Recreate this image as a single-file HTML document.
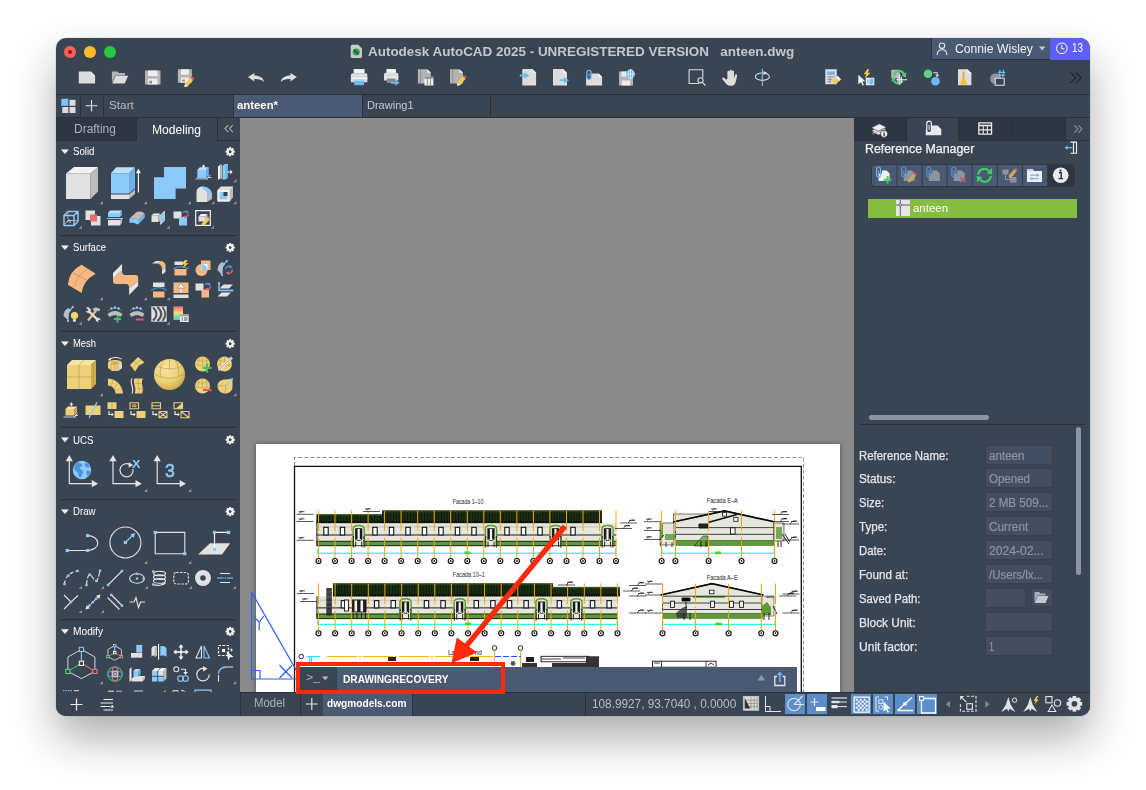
<!DOCTYPE html>
<html><head><meta charset="utf-8"><title>AutoCAD</title><style>
html,body{margin:0;padding:0;}
body{width:1146px;height:790px;background:#fff;position:relative;overflow:hidden;font-family:"Liberation Sans",sans-serif;}
#win{position:absolute;left:56px;top:38px;width:1034px;height:678px;border-radius:10px;background:#3a4554;overflow:hidden;}
#shadow{position:absolute;left:56px;top:38px;width:1034px;height:678px;border-radius:10px;box-shadow:0 22px 45px rgba(0,0,0,0.33),0 0 1px rgba(0,0,0,0.5);}
.a{position:absolute;box-sizing:border-box;}
.t{white-space:nowrap;}
svg{overflow:visible;}
</style></head><body>
<div id="shadow"></div>
<div id="win">
<div class="a " style="left:8px;top:8px;width:12px;height:12px;border-radius:50%;background:#fe5f57;"></div>
<div class="a " style="left:28px;top:8px;width:12px;height:12px;border-radius:50%;background:#febc2e;"></div>
<div class="a " style="left:48px;top:8px;width:12px;height:12px;border-radius:50%;background:#28c840;"></div>
<div class="a " style="left:12px;top:12px;width:4px;height:4px;border-radius:50%;background:#8c1a10;"></div>
<div class="a t" style="left:312.4px;top:5.100000000000001px;height:17px;line-height:17px;font-size:13px;color:#c3c7ce;font-weight:700;transform-origin:0 50%;transform:scaleX(1.0346);">Autodesk AutoCAD 2025 - UNREGISTERED VERSION&nbsp;&nbsp; anteen.dwg</div>
<div class="a " style="left:874.5px;top:0px;width:119.5px;height:21.5px;background:#4a5a72;border-left:1px solid #2b313d;border-bottom:1px solid #2b313d;"></div>
<div class="a t" style="left:899.3px;top:2.6000000000000014px;height:16px;line-height:16px;font-size:12px;color:#f2f3f5;font-weight:400;transform-origin:0 50%;transform:scaleX(1.0145);">Connie Wisley</div>
<div class="a " style="left:993.5999999999999px;top:0px;width:40.4px;height:21.9px;background:#5f5ff5;"></div>
<div class="a t" style="left:1016.3px;top:2.450000000000003px;height:16.5px;line-height:16.5px;font-size:12.5px;color:#fff;font-weight:400;transform-origin:0 50%;transform:scaleX(0.7912);">13</div>
<div class="a " style="left:0px;top:56px;width:1034px;height:24px;border-top:1px solid #2a303c;border-bottom:1px solid #2a303c;"></div>
<div class="a " style="left:24px;top:57px;width:1px;height:22px;background:#2a303c;"></div>
<div class="a " style="left:47px;top:57px;width:1px;height:22px;background:#2a303c;"></div>
<div class="a " style="left:177px;top:57px;width:1px;height:22px;background:#2a303c;"></div>
<div class="a " style="left:306px;top:57px;width:1px;height:22px;background:#2a303c;"></div>
<div class="a " style="left:434px;top:57px;width:1px;height:22px;background:#2a303c;"></div>
<div class="a " style="left:178px;top:57px;width:128px;height:22px;background:#4a5a72;"></div>
<div class="a t" style="left:52.5px;top:59.95px;height:14.5px;line-height:14.5px;font-size:10.5px;color:#b5bbc6;font-weight:400;transform-origin:0 50%;transform:scaleX(1.1185);">Start</div>
<div class="a t" style="left:181px;top:60.05px;height:14.5px;line-height:14.5px;font-size:10.5px;color:#fff;font-weight:700;transform-origin:0 50%;transform:scaleX(1.0810);">anteen*</div>
<div class="a t" style="left:310.5px;top:59.95px;height:14.5px;line-height:14.5px;font-size:10.5px;color:#c3c8d0;font-weight:400;transform-origin:0 50%;transform:scaleX(1.0485);">Drawing1</div>
<div class="a " style="left:184px;top:80px;width:614px;height:574px;background:#8a8a8a;"></div>
<svg class="a" style="left:184px;top:80px;overflow:hidden" width="614" height="574" viewBox="240 118 614 574"><defs><filter id="psh" x="-5%" y="-10%" width="110%" height="120%"><feDropShadow dx="0" dy="0" stdDeviation="2.4" flood-color="#000" flood-opacity="0.45"/></filter></defs><rect x="256" y="444" width="584" height="250" fill="#fff" filter="url(#psh)"/><path d="M294.5 466 V457.5 H801.5" fill="none" stroke="#8a8a8a" stroke-width="1" stroke-dasharray="4 2.1"/><path d="M803.5 457.5 V692" fill="none" stroke="#777" stroke-width="0.8" stroke-dasharray="4 2.1"/><path d="M294.5 692 V466.4 H801.3 V692" fill="none" stroke="#111" stroke-width="1.3"/><rect x="316.5" y="523" width="299.79999999999995" height="18.299999999999955" fill="#e6e6df"/><rect x="316.5" y="541.3" width="299.79999999999995" height="4.400000000000091" fill="#5c9a36"/><path d="M316.5 535.0H616.3M316.5 541.3H616.3M316.5 545.7H616.3M316.9 523V545.7" stroke="#101010" stroke-width="0.95" fill="none"/><path d="M316.5 526.9H616.3" stroke="#9a9a92" stroke-width="0.5"/><rect x="323.8" y="527.3" width="4.4" height="7.7" fill="#fff" stroke="#111" stroke-width="1.1"/><rect x="340.3" y="527.3" width="4.4" height="7.7" fill="#fff" stroke="#111" stroke-width="1.1"/><rect x="372.8" y="527.3" width="4.4" height="7.7" fill="#fff" stroke="#111" stroke-width="1.1"/><rect x="389.3" y="527.3" width="4.4" height="7.7" fill="#fff" stroke="#111" stroke-width="1.1"/><rect x="405.8" y="527.3" width="4.4" height="7.7" fill="#fff" stroke="#111" stroke-width="1.1"/><rect x="422.3" y="527.3" width="4.4" height="7.7" fill="#fff" stroke="#111" stroke-width="1.1"/><rect x="438.8" y="527.3" width="4.4" height="7.7" fill="#fff" stroke="#111" stroke-width="1.1"/><rect x="455.3" y="527.3" width="4.4" height="7.7" fill="#fff" stroke="#111" stroke-width="1.1"/><rect x="471.8" y="527.3" width="4.4" height="7.7" fill="#fff" stroke="#111" stroke-width="1.1"/><rect x="504.8" y="527.3" width="4.4" height="7.7" fill="#fff" stroke="#111" stroke-width="1.1"/><rect x="521.3" y="527.3" width="4.4" height="7.7" fill="#fff" stroke="#111" stroke-width="1.1"/><rect x="537.8" y="527.3" width="4.4" height="7.7" fill="#fff" stroke="#111" stroke-width="1.1"/><rect x="570.8" y="527.3" width="4.4" height="7.7" fill="#fff" stroke="#111" stroke-width="1.1"/><path d="M353.09999999999997 545.2V529Q353.09999999999997 525.4 358.7 525.4Q364.3 525.4 364.3 529V545.2" fill="#e4ead8" stroke="#5c9a36" stroke-width="1.5"/><rect x="355.09999999999997" y="528.2" width="7.2" height="12.5" fill="#1a1a1a"/><rect x="357.59999999999997" y="529" width="2.2" height="11.0" fill="#f4f4f4"/><path d="M353.4 535.9865v11.7M364.0 535.9865v11.7M355.7 541.3v5.5M361.7 541.3v5.5" stroke="#111" stroke-width="0.9"/><path d="M353.7 538.8l2.2 2.5l1.3 -2.5M363.7 538.8l-2.2 2.5l-1.3 -2.5" stroke="#fff" stroke-width="0.8" fill="none"/><path d="M485.4 545.2V529Q485.4 525.4 491 525.4Q496.6 525.4 496.6 529V545.2" fill="#e4ead8" stroke="#5c9a36" stroke-width="1.5"/><rect x="487.4" y="528.2" width="7.2" height="12.5" fill="#1a1a1a"/><rect x="489.9" y="529" width="2.2" height="11.0" fill="#f4f4f4"/><path d="M485.7 535.9865v11.7M496.3 535.9865v11.7M488 541.3v5.5M494 541.3v5.5" stroke="#111" stroke-width="0.9"/><path d="M486 538.8l2.2 2.5l1.3 -2.5M496 538.8l-2.2 2.5l-1.3 -2.5" stroke="#fff" stroke-width="0.8" fill="none"/><path d="M549.9 545.2V529Q549.9 525.4 555.5 525.4Q561.1 525.4 561.1 529V545.2" fill="#e4ead8" stroke="#5c9a36" stroke-width="1.5"/><rect x="551.9" y="528.2" width="7.2" height="12.5" fill="#1a1a1a"/><rect x="554.4" y="529" width="2.2" height="11.0" fill="#f4f4f4"/><path d="M550.2 535.9865v11.7M560.8 535.9865v11.7M552.5 541.3v5.5M558.5 541.3v5.5" stroke="#111" stroke-width="0.9"/><path d="M550.5 538.8l2.2 2.5l1.3 -2.5M560.5 538.8l-2.2 2.5l-1.3 -2.5" stroke="#fff" stroke-width="0.8" fill="none"/><path d="M601.9 545.2V529Q601.9 525.4 607.5 525.4Q613.1 525.4 613.1 529V545.2" fill="#e4ead8" stroke="#5c9a36" stroke-width="1.5"/><rect x="603.9" y="528.2" width="7.2" height="12.5" fill="#1a1a1a"/><rect x="606.4" y="529" width="2.2" height="11.0" fill="#f4f4f4"/><path d="M602.2 535.9865v11.7M612.8 535.9865v11.7M604.5 541.3v5.5M610.5 541.3v5.5" stroke="#111" stroke-width="0.9"/><path d="M602.5 538.8l2.2 2.5l1.3 -2.5M612.5 538.8l-2.2 2.5l-1.3 -2.5" stroke="#fff" stroke-width="0.8" fill="none"/><rect x="316.5" y="514.2" width="66.5" height="9.0" fill="#27401a"/><path d="M317.1 515.8V521.7 M318.7 515.6V521.7 M320.2 516.2V521.7 M321.8 515.5V521.7 M323.3 516.0V521.7 M324.9 515.8V521.7 M326.4 515.5V521.7 M328.0 516.0V521.7 M329.5 515.4V521.7 M331.1 515.9V521.7 M332.6 515.5V521.7 M334.2 515.5V521.7 M335.7 515.9V521.7 M337.3 516.4V521.7 M338.8 515.5V521.7 M340.4 515.7V521.7 M341.9 516.2V521.7 M343.5 516.5V521.7 M345.0 516.1V521.7 M346.6 515.9V521.7 M348.1 516.6V521.7 M349.7 515.5V521.7 M351.2 516.4V521.7 M352.8 515.7V521.7 M354.3 515.6V521.7 M355.9 515.5V521.7 M357.4 515.8V521.7 M359.0 516.4V521.7 M360.5 515.6V521.7 M362.1 516.1V521.7 M363.6 516.2V521.7 M365.2 515.8V521.7 M366.7 516.1V521.7 M368.3 515.5V521.7 M369.8 515.5V521.7 M371.4 515.6V521.7 M372.9 516.2V521.7 M374.5 515.9V521.7 M376.0 515.8V521.7 M377.6 516.1V521.7 M379.1 515.9V521.7 M380.7 515.8V521.7 M382.2 516.4V521.7" stroke="#050805" stroke-width="0.8" opacity="0.85"/><path d="M316.5 514.5H383" stroke="#3c5e26" stroke-width="0.7"/><path d="M316.5 522.1H383" stroke="#000" stroke-width="1.9" stroke-dasharray="1.6 0.7"/><rect x="382" y="510.4" width="220" height="12.800000000000068" fill="#27401a"/><path d="M382.6 512.4V521.7 M384.2 511.9V521.7 M385.7 512.3V521.7 M387.3 512.2V521.7 M388.8 512.7V521.7 M390.4 512.5V521.7 M391.9 511.9V521.7 M393.5 512.8V521.7 M395.0 511.7V521.7 M396.6 512.1V521.7 M398.1 512.5V521.7 M399.7 511.8V521.7 M401.2 512.2V521.7 M402.8 511.6V521.7 M404.3 512.4V521.7 M405.9 512.5V521.7 M407.4 512.3V521.7 M409.0 512.7V521.7 M410.5 512.0V521.7 M412.1 512.4V521.7 M413.6 512.3V521.7 M415.2 512.3V521.7 M416.7 512.1V521.7 M418.3 512.6V521.7 M419.8 512.7V521.7 M421.4 512.2V521.7 M422.9 512.4V521.7 M424.5 511.7V521.7 M426.0 512.4V521.7 M427.6 512.4V521.7 M429.1 512.8V521.7 M430.7 512.6V521.7 M432.2 511.9V521.7 M433.8 512.1V521.7 M435.3 512.4V521.7 M436.9 511.6V521.7 M438.4 512.2V521.7 M440.0 511.8V521.7 M441.5 511.7V521.7 M443.1 511.7V521.7 M444.6 512.5V521.7 M446.2 511.8V521.7 M447.7 511.9V521.7 M449.3 512.1V521.7 M450.8 512.6V521.7 M452.4 511.7V521.7 M453.9 512.1V521.7 M455.5 512.3V521.7 M457.0 512.7V521.7 M458.6 512.6V521.7 M460.1 512.6V521.7 M461.7 511.9V521.7 M463.2 512.1V521.7 M464.8 512.0V521.7 M466.3 512.7V521.7 M467.9 512.7V521.7 M469.4 511.8V521.7 M471.0 511.8V521.7 M472.5 511.9V521.7 M474.1 511.9V521.7 M475.6 512.2V521.7 M477.2 512.3V521.7 M478.7 511.9V521.7 M480.3 511.6V521.7 M481.8 512.1V521.7 M483.4 512.0V521.7 M484.9 512.3V521.7 M486.5 512.7V521.7 M488.0 512.4V521.7 M489.6 512.2V521.7 M491.1 512.3V521.7 M492.7 512.4V521.7 M494.2 511.7V521.7 M495.8 512.7V521.7 M497.3 512.5V521.7 M498.9 512.6V521.7 M500.4 512.6V521.7 M502.0 512.1V521.7 M503.5 512.1V521.7 M505.1 511.7V521.7 M506.6 512.4V521.7 M508.2 511.7V521.7 M509.7 511.7V521.7 M511.3 511.9V521.7 M512.8 511.8V521.7 M514.4 512.0V521.7 M515.9 511.7V521.7 M517.5 511.6V521.7 M519.0 511.8V521.7 M520.6 511.7V521.7 M522.1 512.0V521.7 M523.7 511.6V521.7 M525.2 512.6V521.7 M526.8 512.3V521.7 M528.3 511.8V521.7 M529.9 511.9V521.7 M531.4 512.0V521.7 M533.0 512.0V521.7 M534.5 511.7V521.7 M536.1 512.6V521.7 M537.6 512.8V521.7 M539.2 512.2V521.7 M540.7 512.2V521.7 M542.3 511.7V521.7 M543.8 511.7V521.7 M545.4 512.0V521.7 M546.9 511.9V521.7 M548.4 512.6V521.7 M550.0 511.8V521.7 M551.5 511.6V521.7 M553.1 512.7V521.7 M554.6 512.2V521.7 M556.2 511.8V521.7 M557.7 512.3V521.7 M559.3 511.6V521.7 M560.8 512.2V521.7 M562.4 512.8V521.7 M563.9 512.6V521.7 M565.5 512.4V521.7 M567.0 511.9V521.7 M568.6 512.0V521.7 M570.1 511.8V521.7 M571.7 512.5V521.7 M573.2 512.2V521.7 M574.8 512.5V521.7 M576.3 512.0V521.7 M577.9 511.9V521.7 M579.4 512.6V521.7 M581.0 512.8V521.7 M582.5 512.6V521.7 M584.1 512.6V521.7 M585.6 512.6V521.7 M587.2 512.5V521.7 M588.7 511.9V521.7 M590.3 512.2V521.7 M591.8 512.0V521.7 M593.4 511.6V521.7 M594.9 511.6V521.7 M596.5 511.9V521.7 M598.0 511.9V521.7 M599.6 512.4V521.7 M601.1 512.7V521.7" stroke="#050805" stroke-width="0.8" opacity="0.85"/><path d="M382 510.7H602" stroke="#3c5e26" stroke-width="0.7"/><path d="M382 522.1H602" stroke="#000" stroke-width="1.9" stroke-dasharray="1.6 0.7"/><path d="M317.5 553.2H616.04M317.8 553.2v-4M615.74 553.2v-4" stroke="#00f0f0" stroke-width="1" fill="none"/><path d="M318.5 510.5V558.2 M335.0 510.5V558.2 M351.6 510.5V558.2 M368.1 510.5V558.2 M384.6 510.5V558.2 M401.1 510.5V558.2 M417.7 510.5V558.2 M434.2 510.5V558.2 M450.7 510.5V558.2 M467.3 510.5V558.2 M483.8 510.5V558.2 M500.3 510.5V558.2 M516.9 510.5V558.2 M533.4 510.5V558.2 M549.9 510.5V558.2 M566.5 510.5V558.2 M583.0 510.5V558.2 M599.5 510.5V558.2 M616.0 510.5V558.2" stroke="#f2a900" stroke-width="1" stroke-dasharray="20.5 2.2 1.3 3.2 200"/><circle cx="318.5" cy="561" r="2.5" fill="#fff" stroke="#0a0a0a" stroke-width="1.15"/><path d="M317.8 560.1h1.4v1.8h-1.4z" fill="#222"/><circle cx="335.0" cy="561" r="2.5" fill="#fff" stroke="#0a0a0a" stroke-width="1.15"/><path d="M334.3 560.1h1.4v1.8h-1.4z" fill="#222"/><circle cx="351.6" cy="561" r="2.5" fill="#fff" stroke="#0a0a0a" stroke-width="1.15"/><path d="M350.9 560.1h1.4v1.8h-1.4z" fill="#222"/><circle cx="368.1" cy="561" r="2.5" fill="#fff" stroke="#0a0a0a" stroke-width="1.15"/><path d="M367.4 560.1h1.4v1.8h-1.4z" fill="#222"/><circle cx="384.6" cy="561" r="2.5" fill="#fff" stroke="#0a0a0a" stroke-width="1.15"/><path d="M383.9 560.1h1.4v1.8h-1.4z" fill="#222"/><circle cx="401.1" cy="561" r="2.5" fill="#fff" stroke="#0a0a0a" stroke-width="1.15"/><path d="M400.4 560.1h1.4v1.8h-1.4z" fill="#222"/><circle cx="417.7" cy="561" r="2.5" fill="#fff" stroke="#0a0a0a" stroke-width="1.15"/><path d="M417.0 560.1h1.4v1.8h-1.4z" fill="#222"/><circle cx="434.2" cy="561" r="2.5" fill="#fff" stroke="#0a0a0a" stroke-width="1.15"/><path d="M433.5 560.1h1.4v1.8h-1.4z" fill="#222"/><circle cx="450.7" cy="561" r="2.5" fill="#fff" stroke="#0a0a0a" stroke-width="1.15"/><path d="M450.0 560.1h1.4v1.8h-1.4z" fill="#222"/><circle cx="467.3" cy="561" r="2.5" fill="#fff" stroke="#0a0a0a" stroke-width="1.15"/><path d="M466.6 560.1h1.4v1.8h-1.4z" fill="#222"/><circle cx="483.8" cy="561" r="2.5" fill="#fff" stroke="#0a0a0a" stroke-width="1.15"/><path d="M483.1 560.1h1.4v1.8h-1.4z" fill="#222"/><circle cx="500.3" cy="561" r="2.5" fill="#fff" stroke="#0a0a0a" stroke-width="1.15"/><path d="M499.6 560.1h1.4v1.8h-1.4z" fill="#222"/><circle cx="516.9" cy="561" r="2.5" fill="#fff" stroke="#0a0a0a" stroke-width="1.15"/><path d="M516.2 560.1h1.4v1.8h-1.4z" fill="#222"/><circle cx="533.4" cy="561" r="2.5" fill="#fff" stroke="#0a0a0a" stroke-width="1.15"/><path d="M532.7 560.1h1.4v1.8h-1.4z" fill="#222"/><circle cx="549.9" cy="561" r="2.5" fill="#fff" stroke="#0a0a0a" stroke-width="1.15"/><path d="M549.2 560.1h1.4v1.8h-1.4z" fill="#222"/><circle cx="566.5" cy="561" r="2.5" fill="#fff" stroke="#0a0a0a" stroke-width="1.15"/><path d="M565.8 560.1h1.4v1.8h-1.4z" fill="#222"/><circle cx="583.0" cy="561" r="2.5" fill="#fff" stroke="#0a0a0a" stroke-width="1.15"/><path d="M582.3 560.1h1.4v1.8h-1.4z" fill="#222"/><circle cx="599.5" cy="561" r="2.5" fill="#fff" stroke="#0a0a0a" stroke-width="1.15"/><path d="M598.8 560.1h1.4v1.8h-1.4z" fill="#222"/><circle cx="616.0" cy="561" r="2.5" fill="#fff" stroke="#0a0a0a" stroke-width="1.15"/><path d="M615.3 560.1h1.4v1.8h-1.4z" fill="#222"/><rect x="464.5" y="551.5" width="6" height="2.7" fill="#35e01c"/><path d="M296.5 514.3h17M298.5 511.69999999999993h6M299.5 513.0l3 -2" stroke="#111" stroke-width="0.7" fill="none"/><path d="M296.5 521.5h17M298.5 518.9h6M299.5 520.2l3 -2" stroke="#111" stroke-width="0.7" fill="none"/><path d="M296.5 540.3h17M298.5 537.6999999999999h6M299.5 539.0l3 -2" stroke="#111" stroke-width="0.7" fill="none"/><path d="M363 511.5h17M365 508.9h6M366 510.2l3 -2" stroke="#111" stroke-width="0.7" fill="none"/><path d="M637 523h-17M635 520.4h-6M628 523l3 -3h4" stroke="#111" stroke-width="0.7" fill="none"/><path d="M632 528.5h-17M630 525.9h-6M623 528.5l3 -3h4" stroke="#111" stroke-width="0.7" fill="none"/><text x="452.8" y="504" font-size="7.4" fill="#222" textLength="30.5" lengthAdjust="spacingAndGlyphs" font-family="Liberation Sans,sans-serif">Facada 1–10</text><rect x="316.5" y="596.3" width="301.0" height="17.700000000000045" fill="#e6e6df"/><rect x="316.5" y="614" width="301.0" height="4.600000000000023" fill="#5c9a36"/><path d="M316.5 607.9H617.5M316.5 614H617.5M316.5 618.6H617.5M316.9 596.3V618.6" stroke="#101010" stroke-width="0.95" fill="none"/><path d="M316.5 600.2H617.5" stroke="#9a9a92" stroke-width="0.5"/><rect x="341.21000000000004" y="600.6" width="4.4" height="7.3" fill="#fff" stroke="#111" stroke-width="1.1"/><rect x="374.43" y="600.6" width="4.4" height="7.3" fill="#fff" stroke="#111" stroke-width="1.1"/><rect x="391.04" y="600.6" width="4.4" height="7.3" fill="#fff" stroke="#111" stroke-width="1.1"/><rect x="424.26" y="600.6" width="4.4" height="7.3" fill="#fff" stroke="#111" stroke-width="1.1"/><rect x="440.87" y="600.6" width="4.4" height="7.3" fill="#fff" stroke="#111" stroke-width="1.1"/><rect x="474.09000000000003" y="600.6" width="4.4" height="7.3" fill="#fff" stroke="#111" stroke-width="1.1"/><rect x="490.70000000000005" y="600.6" width="4.4" height="7.3" fill="#fff" stroke="#111" stroke-width="1.1"/><rect x="507.31" y="600.6" width="4.4" height="7.3" fill="#fff" stroke="#111" stroke-width="1.1"/><rect x="523.9199999999998" y="600.6" width="4.4" height="7.3" fill="#fff" stroke="#111" stroke-width="1.1"/><rect x="557.1399999999999" y="600.6" width="4.4" height="7.3" fill="#fff" stroke="#111" stroke-width="1.1"/><rect x="590.3599999999999" y="600.6" width="4.4" height="7.3" fill="#fff" stroke="#111" stroke-width="1.1"/><rect x="606.9699999999999" y="600.6" width="4.4" height="7.3" fill="#fff" stroke="#111" stroke-width="1.1"/><path d="M399.9 618.1V602.3Q399.9 598.6999999999999 405.5 598.6999999999999Q411.1 598.6999999999999 411.1 602.3V618.1" fill="#e4ead8" stroke="#5c9a36" stroke-width="1.5"/><rect x="401.9" y="601.5" width="7.2" height="12.1" fill="#1a1a1a"/><rect x="404.4" y="602.3" width="2.2" height="10.6" fill="#f4f4f4"/><path d="M400.2 608.8935v11.7M410.8 608.8935v11.7M402.5 614v5.5M408.5 614v5.5" stroke="#111" stroke-width="0.9"/><path d="M400.5 611.5l2.2 2.5l1.3 -2.5M410.5 611.5l-2.2 2.5l-1.3 -2.5" stroke="#fff" stroke-width="0.8" fill="none"/><path d="M454.09999999999997 618.1V602.3Q454.09999999999997 598.6999999999999 459.7 598.6999999999999Q465.3 598.6999999999999 465.3 602.3V618.1" fill="#e4ead8" stroke="#5c9a36" stroke-width="1.5"/><rect x="456.09999999999997" y="601.5" width="7.2" height="12.1" fill="#1a1a1a"/><rect x="458.59999999999997" y="602.3" width="2.2" height="10.6" fill="#f4f4f4"/><path d="M454.4 608.8935v11.7M465.0 608.8935v11.7M456.7 614v5.5M462.7 614v5.5" stroke="#111" stroke-width="0.9"/><path d="M454.7 611.5l2.2 2.5l1.3 -2.5M464.7 611.5l-2.2 2.5l-1.3 -2.5" stroke="#fff" stroke-width="0.8" fill="none"/><path d="M535.9 618.1V602.3Q535.9 598.6999999999999 541.5 598.6999999999999Q547.1 598.6999999999999 547.1 602.3V618.1" fill="#e4ead8" stroke="#5c9a36" stroke-width="1.5"/><rect x="537.9" y="601.5" width="7.2" height="12.1" fill="#1a1a1a"/><rect x="540.4" y="602.3" width="2.2" height="10.6" fill="#f4f4f4"/><path d="M536.2 608.8935v11.7M546.8 608.8935v11.7M538.5 614v5.5M544.5 614v5.5" stroke="#111" stroke-width="0.9"/><path d="M536.5 611.5l2.2 2.5l1.3 -2.5M546.5 611.5l-2.2 2.5l-1.3 -2.5" stroke="#fff" stroke-width="0.8" fill="none"/><path d="M570.8 618.1V602.3Q570.8 598.6999999999999 576.4 598.6999999999999Q582.0 598.6999999999999 582.0 602.3V618.1" fill="#e4ead8" stroke="#5c9a36" stroke-width="1.5"/><rect x="572.8" y="601.5" width="7.2" height="12.1" fill="#1a1a1a"/><rect x="575.3" y="602.3" width="2.2" height="10.6" fill="#f4f4f4"/><path d="M571.1 608.8935v11.7M581.6999999999999 608.8935v11.7M573.4 614v5.5M579.4 614v5.5" stroke="#111" stroke-width="0.9"/><path d="M571.4 611.5l2.2 2.5l1.3 -2.5M581.4 611.5l-2.2 2.5l-1.3 -2.5" stroke="#fff" stroke-width="0.8" fill="none"/><rect x="344.5" y="600" width="4" height="11" fill="#fff" stroke="#111" stroke-width="0.9"/><rect x="352" y="599.5" width="14.5" height="13" fill="#1a1a1a"/><rect x="354.5" y="600.5" width="2.6" height="11" fill="#f4f4f4"/><rect x="360.500" y="600.500" width="2.600" height="11" fill="#f4f4f4"/><path d="M353 613v6M365.500 613v6M357 613v5M361.500 613v5" stroke="#111" stroke-width="0.900"/><rect x="333" y="583.3" width="220" height="13.200000000000045" fill="#27401a"/><path d="M333.6 585.0V595.0 M335.2 585.6V595.0 M336.7 585.7V595.0 M338.3 585.6V595.0 M339.8 584.9V595.0 M341.4 584.8V595.0 M342.9 584.8V595.0 M344.5 584.7V595.0 M346.0 584.7V595.0 M347.6 585.2V595.0 M349.1 585.6V595.0 M350.7 585.5V595.0 M352.2 585.1V595.0 M353.8 585.3V595.0 M355.3 585.5V595.0 M356.9 584.6V595.0 M358.4 585.3V595.0 M360.0 585.6V595.0 M361.5 585.4V595.0 M363.1 585.4V595.0 M364.6 585.1V595.0 M366.2 584.7V595.0 M367.7 585.4V595.0 M369.3 584.9V595.0 M370.8 585.5V595.0 M372.4 585.7V595.0 M373.9 585.0V595.0 M375.5 585.0V595.0 M377.0 585.6V595.0 M378.6 585.4V595.0 M380.1 584.7V595.0 M381.7 584.7V595.0 M383.2 584.7V595.0 M384.8 585.6V595.0 M386.3 585.5V595.0 M387.9 584.7V595.0 M389.4 585.5V595.0 M391.0 585.7V595.0 M392.5 585.3V595.0 M394.1 584.9V595.0 M395.6 585.2V595.0 M397.2 584.7V595.0 M398.7 584.5V595.0 M400.3 585.7V595.0 M401.8 585.3V595.0 M403.4 585.1V595.0 M404.9 585.6V595.0 M406.5 585.0V595.0 M408.0 585.5V595.0 M409.6 585.5V595.0 M411.1 584.8V595.0 M412.7 584.8V595.0 M414.2 584.9V595.0 M415.8 584.8V595.0 M417.3 585.2V595.0 M418.9 584.8V595.0 M420.4 585.0V595.0 M422.0 584.7V595.0 M423.5 585.6V595.0 M425.1 584.9V595.0 M426.6 585.0V595.0 M428.2 585.2V595.0 M429.7 585.6V595.0 M431.3 585.0V595.0 M432.8 585.6V595.0 M434.4 585.1V595.0 M435.9 585.1V595.0 M437.5 585.1V595.0 M439.0 584.5V595.0 M440.6 585.0V595.0 M442.1 584.7V595.0 M443.7 584.5V595.0 M445.2 585.5V595.0 M446.8 584.7V595.0 M448.3 585.1V595.0 M449.9 585.4V595.0 M451.4 585.2V595.0 M453.0 584.9V595.0 M454.5 585.1V595.0 M456.1 585.2V595.0 M457.6 585.4V595.0 M459.2 584.6V595.0 M460.7 585.2V595.0 M462.3 584.8V595.0 M463.8 584.8V595.0 M465.4 585.4V595.0 M466.9 585.1V595.0 M468.5 585.2V595.0 M470.0 585.4V595.0 M471.6 585.6V595.0 M473.1 585.0V595.0 M474.7 585.2V595.0 M476.2 585.1V595.0 M477.8 585.1V595.0 M479.3 585.3V595.0 M480.9 585.0V595.0 M482.4 585.1V595.0 M484.0 585.1V595.0 M485.5 585.6V595.0 M487.1 585.3V595.0 M488.6 585.6V595.0 M490.2 585.6V595.0 M491.7 584.8V595.0 M493.3 585.2V595.0 M494.8 585.6V595.0 M496.4 585.5V595.0 M497.9 584.7V595.0 M499.5 584.6V595.0 M501.0 585.0V595.0 M502.6 584.6V595.0 M504.1 584.8V595.0 M505.7 584.6V595.0 M507.2 585.3V595.0 M508.8 585.4V595.0 M510.3 585.6V595.0 M511.9 584.7V595.0 M513.4 585.4V595.0 M515.0 585.3V595.0 M516.5 584.7V595.0 M518.1 585.6V595.0 M519.6 585.7V595.0 M521.2 584.8V595.0 M522.7 585.6V595.0 M524.3 585.0V595.0 M525.8 585.1V595.0 M527.4 585.7V595.0 M528.9 585.5V595.0 M530.5 584.7V595.0 M532.0 585.0V595.0 M533.6 585.1V595.0 M535.1 584.9V595.0 M536.7 584.7V595.0 M538.2 584.9V595.0 M539.8 585.4V595.0 M541.3 584.5V595.0 M542.9 585.2V595.0 M544.4 585.0V595.0 M546.0 584.5V595.0 M547.5 584.9V595.0 M549.1 585.2V595.0 M550.6 585.1V595.0 M552.2 584.6V595.0" stroke="#050805" stroke-width="0.8" opacity="0.85"/><path d="M333 583.5999999999999H553" stroke="#3c5e26" stroke-width="0.7"/><path d="M333 595.4H553" stroke="#000" stroke-width="1.9" stroke-dasharray="1.6 0.7"/><rect x="552" y="587" width="67.79999999999995" height="9.5" fill="#27401a"/><path d="M552.6 589.4V595.0 M554.1 589.1V595.0 M555.7 589.4V595.0 M557.2 588.3V595.0 M558.8 588.5V595.0 M560.3 588.2V595.0 M561.9 589.1V595.0 M563.4 588.5V595.0 M565.0 588.4V595.0 M566.5 588.7V595.0 M568.1 589.3V595.0 M569.6 589.2V595.0 M571.2 588.5V595.0 M572.7 588.4V595.0 M574.3 589.3V595.0 M575.8 588.9V595.0 M577.4 589.0V595.0 M578.9 588.3V595.0 M580.5 588.3V595.0 M582.0 589.0V595.0 M583.6 588.7V595.0 M585.1 588.3V595.0 M586.7 589.3V595.0 M588.2 589.0V595.0 M589.8 589.2V595.0 M591.3 588.3V595.0 M592.9 589.2V595.0 M594.4 588.3V595.0 M596.0 589.2V595.0 M597.5 588.7V595.0 M599.1 588.6V595.0 M600.6 588.9V595.0 M602.2 589.3V595.0 M603.7 588.5V595.0 M605.3 588.4V595.0 M606.8 588.8V595.0 M608.4 588.5V595.0 M609.9 588.3V595.0 M611.5 588.4V595.0 M613.0 588.3V595.0 M614.6 588.4V595.0 M616.1 588.6V595.0 M617.7 588.6V595.0 M619.2 589.1V595.0" stroke="#050805" stroke-width="0.8" opacity="0.85"/><path d="M552 587.3H619.8" stroke="#3c5e26" stroke-width="0.7"/><path d="M552 595.4H619.8" stroke="#000" stroke-width="1.9" stroke-dasharray="1.6 0.7"/><rect x="326.300" y="588" width="5.600" height="27.500" fill="#222" opacity="0.880"/><path d="M326 592h6M326 597h6M326 602h6M326 607h6" stroke="#888" stroke-width="0.500"/><path d="M317.5 624.3H617.48M317.8 624.3v-4M617.1800000000001 624.3v-4" stroke="#00f0f0" stroke-width="1" fill="none"/><path d="M318.5 583.5V630.4000000000001 M335.1 583.5V630.4000000000001 M351.7 583.5V630.4000000000001 M368.3 583.5V630.4000000000001 M384.9 583.5V630.4000000000001 M401.6 583.5V630.4000000000001 M418.2 583.5V630.4000000000001 M434.8 583.5V630.4000000000001 M451.4 583.5V630.4000000000001 M468.0 583.5V630.4000000000001 M484.6 583.5V630.4000000000001 M501.2 583.5V630.4000000000001 M517.8 583.5V630.4000000000001 M534.4 583.5V630.4000000000001 M551.0 583.5V630.4000000000001 M567.6 583.5V630.4000000000001 M584.3 583.5V630.4000000000001 M600.9 583.5V630.4000000000001 M617.5 583.5V630.4000000000001" stroke="#f2a900" stroke-width="1" stroke-dasharray="20.5 2.2 1.3 3.2 200"/><circle cx="318.5" cy="633.2" r="2.5" fill="#fff" stroke="#0a0a0a" stroke-width="1.15"/><path d="M317.8 632.3000000000001h1.4v1.8h-1.4z" fill="#222"/><circle cx="335.1" cy="633.2" r="2.5" fill="#fff" stroke="#0a0a0a" stroke-width="1.15"/><path d="M334.4 632.3000000000001h1.4v1.8h-1.4z" fill="#222"/><circle cx="351.7" cy="633.2" r="2.5" fill="#fff" stroke="#0a0a0a" stroke-width="1.15"/><path d="M351.0 632.3000000000001h1.4v1.8h-1.4z" fill="#222"/><circle cx="368.3" cy="633.2" r="2.5" fill="#fff" stroke="#0a0a0a" stroke-width="1.15"/><path d="M367.6 632.3000000000001h1.4v1.8h-1.4z" fill="#222"/><circle cx="384.9" cy="633.2" r="2.5" fill="#fff" stroke="#0a0a0a" stroke-width="1.15"/><path d="M384.2 632.3000000000001h1.4v1.8h-1.4z" fill="#222"/><circle cx="401.6" cy="633.2" r="2.5" fill="#fff" stroke="#0a0a0a" stroke-width="1.15"/><path d="M400.9 632.3000000000001h1.4v1.8h-1.4z" fill="#222"/><circle cx="418.2" cy="633.2" r="2.5" fill="#fff" stroke="#0a0a0a" stroke-width="1.15"/><path d="M417.5 632.3000000000001h1.4v1.8h-1.4z" fill="#222"/><circle cx="434.8" cy="633.2" r="2.5" fill="#fff" stroke="#0a0a0a" stroke-width="1.15"/><path d="M434.1 632.3000000000001h1.4v1.8h-1.4z" fill="#222"/><circle cx="451.4" cy="633.2" r="2.5" fill="#fff" stroke="#0a0a0a" stroke-width="1.15"/><path d="M450.7 632.3000000000001h1.4v1.8h-1.4z" fill="#222"/><circle cx="468.0" cy="633.2" r="2.5" fill="#fff" stroke="#0a0a0a" stroke-width="1.15"/><path d="M467.3 632.3000000000001h1.4v1.8h-1.4z" fill="#222"/><circle cx="484.6" cy="633.2" r="2.5" fill="#fff" stroke="#0a0a0a" stroke-width="1.15"/><path d="M483.9 632.3000000000001h1.4v1.8h-1.4z" fill="#222"/><circle cx="501.2" cy="633.2" r="2.5" fill="#fff" stroke="#0a0a0a" stroke-width="1.15"/><path d="M500.5 632.3000000000001h1.4v1.8h-1.4z" fill="#222"/><circle cx="517.8" cy="633.2" r="2.5" fill="#fff" stroke="#0a0a0a" stroke-width="1.15"/><path d="M517.1 632.3000000000001h1.4v1.8h-1.4z" fill="#222"/><circle cx="534.4" cy="633.2" r="2.5" fill="#fff" stroke="#0a0a0a" stroke-width="1.15"/><path d="M533.7 632.3000000000001h1.4v1.8h-1.4z" fill="#222"/><circle cx="551.0" cy="633.2" r="2.5" fill="#fff" stroke="#0a0a0a" stroke-width="1.15"/><path d="M550.3 632.3000000000001h1.4v1.8h-1.4z" fill="#222"/><circle cx="567.6" cy="633.2" r="2.5" fill="#fff" stroke="#0a0a0a" stroke-width="1.15"/><path d="M566.9 632.3000000000001h1.4v1.8h-1.4z" fill="#222"/><circle cx="584.3" cy="633.2" r="2.5" fill="#fff" stroke="#0a0a0a" stroke-width="1.15"/><path d="M583.6 632.3000000000001h1.4v1.8h-1.4z" fill="#222"/><circle cx="600.9" cy="633.2" r="2.5" fill="#fff" stroke="#0a0a0a" stroke-width="1.15"/><path d="M600.2 632.3000000000001h1.4v1.8h-1.4z" fill="#222"/><circle cx="617.5" cy="633.2" r="2.5" fill="#fff" stroke="#0a0a0a" stroke-width="1.15"/><path d="M616.8 632.3000000000001h1.4v1.8h-1.4z" fill="#222"/><rect x="465" y="622.5999999999999" width="6" height="2.7" fill="#35e01c"/><path d="M297 593.5h17M299 590.9h6M300 592.2l3 -2" stroke="#111" stroke-width="0.7" fill="none"/><path d="M300 601.5h17M302 598.9h6M303 600.2l3 -2" stroke="#111" stroke-width="0.7" fill="none"/><path d="M575 585h-17M573 582.4h-6M566 585l3 -3h4" stroke="#111" stroke-width="0.7" fill="none"/><path d="M646 585.5h-17M644 582.9h-6M637 585.5l3 -3h4" stroke="#111" stroke-width="0.7" fill="none"/><path d="M640 591h-17M638 588.4h-6M631 591l3 -3h4" stroke="#111" stroke-width="0.7" fill="none"/><path d="M646 596h-17M644 593.4h-6M637 596l3 -3h4" stroke="#111" stroke-width="0.7" fill="none"/><path d="M646 613h-17M644 610.4h-6M637 613l3 -3h4" stroke="#111" stroke-width="0.7" fill="none"/><text x="452.8" y="577.3" font-size="7.4" fill="#222" textLength="32" lengthAdjust="spacingAndGlyphs" font-family="Liberation Sans,sans-serif">Facada 10–1</text><rect x="673.5" y="514" width="50" height="8" fill="#e6e6df" stroke="#222" stroke-width="0.6"/><path d="M675.5 521.6L724.5 510.8L774 521.6V541H675.5Z" fill="#e6e6df" stroke="#111" stroke-width="0.8"/><path d="M673 522L724.5 510.8L775 522" fill="none" stroke="#0a0a0a" stroke-width="1.7"/><path d="M708 522.5L737 514.5" stroke="#0a0a0a" stroke-width="1.5"/><rect x="675.5" y="540.8" width="98.5" height="4.8" fill="#5c9a36" stroke="#2c4a18" stroke-width="0.4"/><path d="M676 527.6H774M676 534.3H774" stroke="#151515" stroke-width="0.8"/><rect x="730.5" y="527.8" width="4.6" height="6.2" fill="#fff" stroke="#111" stroke-width="0.9"/><rect x="722.5" y="512.5" width="4" height="3.6" fill="#fff" stroke="#111" stroke-width="0.8"/><rect x="733.8" y="517.3" width="4.2" height="4" fill="#fff" stroke="#111" stroke-width="0.8"/><path d="M660 523h14v22h-14z" fill="#e6e6df" stroke="#222" stroke-width="0.6"/><rect x="660" y="524" width="3" height="14" fill="#5c9a36"/><path d="M665 534h10v6h-10z" fill="#5c9a36" opacity="0.8"/><path d="M659 540l5 -5M661 547v-5M666 547v-5M672 547v-5" stroke="#111" stroke-width="0.8"/><path d="M694 546l9 -10h5v10z" fill="#5c9a36" opacity="0.75" stroke="#111" stroke-width="0.7"/><path d="M699 524h9v4h-9zM701 547v-6M706 547v-6" stroke="#111" stroke-width="0.9" fill="#222"/><path d="M774 523h10v18h-10z" fill="#e6e6df" stroke="#222" stroke-width="0.6"/><path d="M776 527h6v12h-6z" fill="#5c9a36" opacity="0.8"/><path d="M782 534l7 10M785 534l5 8M778 547v-6M781 547v-6" stroke="#111" stroke-width="0.9"/><path d="M661.6 553.2H774.5M661.9 553.2v-4M774.2 553.2v-4" stroke="#00f0f0" stroke-width="1" fill="none"/><path d="M661.6 510.5V558.2 M675.4 510.5V558.2 M708.6 510.5V558.2 M741.5 510.5V558.2 M774.5 510.5V558.2" stroke="#f2a900" stroke-width="1" stroke-dasharray="20.5 2.2 1.3 3.2 200"/><circle cx="661.6" cy="561" r="2.5" fill="#fff" stroke="#0a0a0a" stroke-width="1.15"/><path d="M660.9 560.1h1.4v1.8h-1.4z" fill="#222"/><circle cx="675.4" cy="561" r="2.5" fill="#fff" stroke="#0a0a0a" stroke-width="1.15"/><path d="M674.7 560.1h1.4v1.8h-1.4z" fill="#222"/><circle cx="708.6" cy="561" r="2.5" fill="#fff" stroke="#0a0a0a" stroke-width="1.15"/><path d="M707.9 560.1h1.4v1.8h-1.4z" fill="#222"/><circle cx="741.5" cy="561" r="2.5" fill="#fff" stroke="#0a0a0a" stroke-width="1.15"/><path d="M740.8 560.1h1.4v1.8h-1.4z" fill="#222"/><circle cx="774.5" cy="561" r="2.5" fill="#fff" stroke="#0a0a0a" stroke-width="1.15"/><path d="M773.8 560.1h1.4v1.8h-1.4z" fill="#222"/><rect x="715" y="551.5" width="6" height="2.7" fill="#35e01c"/><path d="M644 521.7h17M646 519.1h6M647 520.4000000000001l3 -2" stroke="#111" stroke-width="0.7" fill="none"/><path d="M644 530.5h17M646 527.9h6M647 529.2l3 -2" stroke="#111" stroke-width="0.7" fill="none"/><path d="M644 539.5h17M646 536.9h6M647 538.2l3 -2" stroke="#111" stroke-width="0.7" fill="none"/><path d="M709 511.5h17M711 508.9h6M712 510.2l3 -2" stroke="#111" stroke-width="0.7" fill="none"/><path d="M789 514.5h-17M787 511.9h-6M780 514.5l3 -3h4" stroke="#111" stroke-width="0.7" fill="none"/><path d="M789 521.5h-17M787 518.9h-6M780 521.5l3 -3h4" stroke="#111" stroke-width="0.7" fill="none"/><path d="M799 524h-17M797 521.4h-6M790 524l3 -3h4" stroke="#111" stroke-width="0.7" fill="none"/><path d="M799 540h-17M797 537.4h-6M790 540l3 -3h4" stroke="#111" stroke-width="0.7" fill="none"/><text x="706.8" y="503" font-size="7.4" fill="#222" textLength="31" lengthAdjust="spacingAndGlyphs" font-family="Liberation Sans,sans-serif">Facada E–A</text><path d="M662.5 594.6L712 583.6L762 594.6V614H662.5Z" fill="#e6e6df" stroke="#111" stroke-width="0.8"/><path d="M660.5 595L712 583.6L763.5 595" fill="none" stroke="#0a0a0a" stroke-width="1.7"/><rect x="662.5" y="613.5" width="100" height="5" fill="#5c9a36" stroke="#2c4a18" stroke-width="0.4"/><rect x="693" y="596" width="32" height="1.8" fill="#5c9a36"/><path d="M663 596.2H762M663 603H762M663 609.5H762" stroke="#151515" stroke-width="0.8"/><rect x="670.6" y="601.2" width="3.8" height="6.2" fill="#fff" stroke="#111" stroke-width="0.9"/><rect x="710.6" y="601.2" width="3.8" height="6.2" fill="#fff" stroke="#111" stroke-width="0.9"/><rect x="729.6" y="601.2" width="3.8" height="6.2" fill="#fff" stroke="#111" stroke-width="0.9"/><rect x="739.6" y="601.2" width="3.8" height="6.2" fill="#fff" stroke="#111" stroke-width="0.9"/><rect x="709.5" y="590.2" width="4.4" height="3.6" fill="#fff" stroke="#111" stroke-width="0.8"/><path d="M676 613l6 -5l5 -2v12h-10z" fill="#333" opacity="0.8"/><path d="M682 598h8v3h-8zM684 620v-7M690 620v-7M686 602v6" stroke="#111" stroke-width="0.9"/><path d="M762 596h12v20h-12z" fill="#e6e6df" stroke="#222" stroke-width="0.5"/><path d="M762 606l5 -4l4 5v8h-9z" fill="#5c9a36"/><path d="M764 620v-7M769 620v-7M773 606l4 8M766 597h8" stroke="#111" stroke-width="0.9"/><path d="M662.5 624.3H775.5M662.8 624.3v-4M775.2 624.3v-4" stroke="#00f0f0" stroke-width="1" fill="none"/><path d="M662.5 583.6V630.4000000000001 M695.6 583.6V630.4000000000001 M728.6 583.6V630.4000000000001 M761.3 583.6V630.4000000000001 M775.5 583.6V630.4000000000001" stroke="#f2a900" stroke-width="1" stroke-dasharray="20.5 2.2 1.3 3.2 200"/><circle cx="662.5" cy="633.2" r="2.5" fill="#fff" stroke="#0a0a0a" stroke-width="1.15"/><path d="M661.8 632.3000000000001h1.4v1.8h-1.4z" fill="#222"/><circle cx="695.6" cy="633.2" r="2.5" fill="#fff" stroke="#0a0a0a" stroke-width="1.15"/><path d="M694.9 632.3000000000001h1.4v1.8h-1.4z" fill="#222"/><circle cx="728.6" cy="633.2" r="2.5" fill="#fff" stroke="#0a0a0a" stroke-width="1.15"/><path d="M727.9 632.3000000000001h1.4v1.8h-1.4z" fill="#222"/><circle cx="761.3" cy="633.2" r="2.5" fill="#fff" stroke="#0a0a0a" stroke-width="1.15"/><path d="M760.6 632.3000000000001h1.4v1.8h-1.4z" fill="#222"/><circle cx="775.5" cy="633.2" r="2.5" fill="#fff" stroke="#0a0a0a" stroke-width="1.15"/><path d="M774.8 632.3000000000001h1.4v1.8h-1.4z" fill="#222"/><rect x="715.5" y="622.5999999999999" width="6" height="2.7" fill="#35e01c"/><path d="M645 584h17M647 581.4h6M648 582.7l3 -2" stroke="#111" stroke-width="0.7" fill="none"/><path d="M645 595h17M647 592.4h6M648 593.7l3 -2" stroke="#111" stroke-width="0.7" fill="none"/><path d="M645 613h17M647 610.4h6M648 611.7l3 -2" stroke="#111" stroke-width="0.7" fill="none"/><path d="M796 596h-17M794 593.4h-6M787 596l3 -3h4" stroke="#111" stroke-width="0.7" fill="none"/><path d="M799.5 594h-17M797.5 591.4h-6M790.5 594l3 -3h4" stroke="#111" stroke-width="0.7" fill="none"/><path d="M799.5 613h-17M797.5 610.4h-6M790.5 613l3 -3h4" stroke="#111" stroke-width="0.7" fill="none"/><text x="706.8" y="580" font-size="7.4" fill="#222" textLength="31" lengthAdjust="spacingAndGlyphs" font-family="Liberation Sans,sans-serif">Facada A–E</text><circle cx="301.3" cy="656.5" r="2.3" fill="#fff" stroke="#111" stroke-width="0.9"/><path d="M307 656.5h13M309.5 657v8M311.5 657v8" stroke="#00e5e5" stroke-width="0.9" fill="none"/><path d="M327 656.5H493" stroke="#f2a900" stroke-width="0.9" stroke-dasharray="30 2 2 2"/><rect x="388" y="657" width="8" height="4" fill="#222"/><rect x="470" y="657" width="9" height="4" fill="#222"/><text x="448" y="655" font-size="6.5" fill="#222" font-family="Liberation Sans,sans-serif">Layout&#160;&#160;&#160;&#160;nd</text><circle cx="494.5" cy="648" r="2.3" fill="#fff" stroke="#111" stroke-width="0.9"/><circle cx="520.5" cy="648" r="2.3" fill="#fff" stroke="#111" stroke-width="0.9"/><path d="M494.5 650.5V667M520.5 650.5V667" stroke="#f2a900" stroke-width="0.9"/><path d="M495 656.5h26" stroke="#2a4cff" stroke-width="1" stroke-dasharray="6 2"/><circle cx="513" cy="663.5" r="2.4" fill="#555"/><rect x="526" y="657" width="8" height="5" fill="#222"/><rect x="522" y="663" width="15" height="4" fill="#333"/><rect x="541" y="656.3" width="48" height="5.5" fill="#fff" stroke="#111" stroke-width="0.9"/><rect x="586" y="656.3" width="13" height="11" fill="#333"/><rect x="552" y="663" width="36" height="4" fill="#333"/><path d="M541 659h20M563 658h22" stroke="#111" stroke-width="0.8"/><rect x="652.5" y="661.2" width="63.5" height="6" fill="#fff" stroke="#111" stroke-width="0.9"/><path d="M661.5 661.2v6M706 661.2v6M654 663h6M708 665l3-2l3 2" stroke="#111" stroke-width="0.8" fill="none"/><path d="M251.7 592.3V679H297M251.7 592.3L297 671.5M251.7 670.5h8.3V679M254 617l5.2 5l4.5-6M259.2 622v8.5M279.5 665l12.5 13M292 665.5L279.5 678" fill="none" stroke="#2f5cff" stroke-width="1.2"/><path d="M565 526.2L465 647.5" stroke="#fb2a0c" stroke-width="5.3" fill="none"/><path d="M451.5 663.3L456.8 637.4L477 652.6Z" fill="#fb2a0c"/></svg>
<div class="a " style="left:0px;top:80px;width:81px;height:23px;background:#2e3543;border-right:1px solid #2a303c;border-bottom:1px solid #2a303c;"></div>
<div class="a " style="left:161px;top:80px;width:23px;height:23px;background:#3a4554;border-left:1px solid #2a303c;border-bottom:1px solid #2a303c;"></div>
<div class="a t" style="left:18.400000000000006px;top:82.6px;height:16px;line-height:16px;font-size:12px;color:#aab1bd;font-weight:400;transform-origin:0 50%;transform:scaleX(0.9973);">Drafting</div>
<div class="a t" style="left:96.4px;top:83.9px;height:16px;line-height:16px;font-size:12px;color:#fff;font-weight:400;transform-origin:0 50%;transform:scaleX(1.0063);">Modeling</div>
<svg class="a" style="left:168px;top:86px;" width="10" height="10" viewBox="0 0 10 10"><path d="M4.300 1L1 4.600L4.300 8.200M8.800 1L5.500 4.600L8.800 8.200" fill="none" stroke="#aab1bd" stroke-width="1.100"/></svg>
<div class="a " style="left:798px;top:80px;width:236px;height:574px;background:#3a4554;"></div>
<div class="a " style="left:798px;top:80px;width:53px;height:23px;background:#2e3543;border-right:1px solid #2a303c;border-bottom:1px solid #2a303c;"></div>
<div class="a " style="left:902px;top:80px;width:54px;height:23px;background:#2e3543;border-left:1px solid #2a303c;border-right:1px solid #2a303c;border-bottom:1px solid #2a303c;"></div>
<div class="a " style="left:956px;top:80px;width:54px;height:23px;background:#2e3543;border-right:1px solid #2a303c;border-bottom:1px solid #2a303c;"></div>
<div class="a " style="left:1010px;top:80px;width:24px;height:23px;border-bottom:1px solid #2a303c;"></div>
<div class="a t" style="left:808.5px;top:102.9px;height:16px;line-height:16px;font-size:12px;color:#f0f2f5;font-weight:400;transform-origin:0 50%;transform:scaleX(1.0306);-webkit-text-stroke:0.25px #f0f2f5;">Reference Manager</div>
<div class="a " style="left:814.7px;top:126px;width:204px;height:22.5px;background:#4a5a72;border:1px solid #2f3644;border-radius:3.5px;overflow:hidden;"><div style="position:absolute;right:0;top:0;width:25.500px;height:22px;background:#2e3543;"></div></div>
<div class="a " style="left:812px;top:161px;width:209px;height:19px;background:#86bc40;"></div>
<div class="a t" style="left:857.3px;top:162.55px;height:15.5px;line-height:15.5px;font-size:11.5px;color:#fff;font-weight:400;transform-origin:0 50%;transform:scaleX(0.9952);">anteen</div>
<div class="a " style="left:813px;top:377px;width:120px;height:5px;background:#8a95a6;border-radius:3px;"></div>
<div class="a " style="left:803px;top:386px;width:226px;height:1px;background:#2a303c;"></div>
<div class="a " style="left:1020px;top:389px;width:5px;height:148px;background:#8a95a6;border-radius:3px;"></div>
<div class="a t" style="left:803.2px;top:409.7px;height:16px;line-height:16px;font-size:12px;color:#e2e5ea;font-weight:400;transform-origin:0 50%;transform:scaleX(0.9507);-webkit-text-stroke:0.25px #e2e5ea;">Reference Name:</div>
<div class="a " style="left:929.2px;top:407.2px;width:67.5px;height:19.5px;background:#434e61;border:1px solid #374050;border-radius:2.5px;"></div>
<div class="a t" style="left:933px;top:409.7px;height:16px;line-height:16px;font-size:12px;color:#8c95a3;font-weight:400;transform-origin:0 50%;transform:scaleX(0.9673);-webkit-text-stroke:0.2px #8c95a3;">anteen</div>
<div class="a t" style="left:803.2px;top:432.7px;height:16px;line-height:16px;font-size:12px;color:#e2e5ea;font-weight:400;transform-origin:0 50%;transform:scaleX(0.9745);-webkit-text-stroke:0.25px #e2e5ea;">Status:</div>
<div class="a " style="left:929.2px;top:430.2px;width:67.5px;height:19.5px;background:#434e61;border:1px solid #374050;border-radius:2.5px;"></div>
<div class="a t" style="left:933px;top:432.7px;height:16px;line-height:16px;font-size:12px;color:#8c95a3;font-weight:400;transform-origin:0 50%;transform:scaleX(0.9602);-webkit-text-stroke:0.2px #8c95a3;">Opened</div>
<div class="a t" style="left:803.2px;top:456.7px;height:16px;line-height:16px;font-size:12px;color:#e2e5ea;font-weight:400;transform-origin:0 50%;transform:scaleX(0.9409);-webkit-text-stroke:0.25px #e2e5ea;">Size:</div>
<div class="a " style="left:929.2px;top:454.2px;width:67.5px;height:19.5px;background:#434e61;border:1px solid #374050;border-radius:2.5px;"></div>
<div class="a t" style="left:933px;top:456.7px;height:16px;line-height:16px;font-size:12px;color:#8c95a3;font-weight:400;transform-origin:0 50%;transform:scaleX(0.9664);-webkit-text-stroke:0.2px #8c95a3;">2 MB 509...</div>
<div class="a t" style="left:803.2px;top:480.70000000000005px;height:16px;line-height:16px;font-size:12px;color:#e2e5ea;font-weight:400;transform-origin:0 50%;transform:scaleX(0.9643);-webkit-text-stroke:0.25px #e2e5ea;">Type:</div>
<div class="a " style="left:929.2px;top:478.20000000000005px;width:67.5px;height:19.5px;background:#434e61;border:1px solid #374050;border-radius:2.5px;"></div>
<div class="a t" style="left:933px;top:480.70000000000005px;height:16px;line-height:16px;font-size:12px;color:#8c95a3;font-weight:400;transform-origin:0 50%;transform:scaleX(0.9797);-webkit-text-stroke:0.2px #8c95a3;">Current</div>
<div class="a t" style="left:803.2px;top:504.70000000000005px;height:16px;line-height:16px;font-size:12px;color:#e2e5ea;font-weight:400;transform-origin:0 50%;transform:scaleX(0.9484);-webkit-text-stroke:0.25px #e2e5ea;">Date:</div>
<div class="a " style="left:929.2px;top:502.20000000000005px;width:67.5px;height:19.5px;background:#434e61;border:1px solid #374050;border-radius:2.5px;"></div>
<div class="a t" style="left:933px;top:504.70000000000005px;height:16px;line-height:16px;font-size:12px;color:#8c95a3;font-weight:400;transform-origin:0 50%;transform:scaleX(1.0086);-webkit-text-stroke:0.2px #8c95a3;">2024-02...</div>
<div class="a t" style="left:803.2px;top:528.7px;height:16px;line-height:16px;font-size:12px;color:#e2e5ea;font-weight:400;transform-origin:0 50%;transform:scaleX(0.9685);-webkit-text-stroke:0.25px #e2e5ea;">Found at:</div>
<div class="a " style="left:929.2px;top:526.2px;width:67.5px;height:19.5px;background:#434e61;border:1px solid #374050;border-radius:2.5px;"></div>
<div class="a t" style="left:933px;top:528.7px;height:16px;line-height:16px;font-size:12px;color:#8c95a3;font-weight:400;transform-origin:0 50%;transform:scaleX(0.9529);-webkit-text-stroke:0.2px #8c95a3;">/Users/lx...</div>
<div class="a t" style="left:803.2px;top:552.7px;height:16px;line-height:16px;font-size:12px;color:#e2e5ea;font-weight:400;transform-origin:0 50%;transform:scaleX(0.9407);-webkit-text-stroke:0.25px #e2e5ea;">Saved Path:</div>
<div class="a " style="left:929.2px;top:550.2px;width:40.5px;height:19.5px;background:#434e61;border:1px solid #374050;border-radius:2.5px;"></div>
<div class="a t" style="left:803.2px;top:576.7px;height:16px;line-height:16px;font-size:12px;color:#e2e5ea;font-weight:400;transform-origin:0 50%;transform:scaleX(0.9887);-webkit-text-stroke:0.25px #e2e5ea;">Block Unit:</div>
<div class="a " style="left:929.2px;top:574.2px;width:67.5px;height:19.5px;background:#434e61;border:1px solid #374050;border-radius:2.5px;"></div>
<div class="a t" style="left:803.2px;top:600.7px;height:16px;line-height:16px;font-size:12px;color:#e2e5ea;font-weight:400;transform-origin:0 50%;transform:scaleX(1.0066);-webkit-text-stroke:0.25px #e2e5ea;">Unit factor:</div>
<div class="a " style="left:929.2px;top:598.2px;width:67.5px;height:19.5px;background:#434e61;border:1px solid #374050;border-radius:2.5px;"></div>
<div class="a t" style="left:933px;top:600.7px;height:16px;line-height:16px;font-size:12px;color:#8c95a3;font-weight:400;transform-origin:0 50%;transform:scaleX(0.7493);-webkit-text-stroke:0.2px #8c95a3;">1</div>
<div class="a " style="left:975px;top:550.4px;width:21.5px;height:19px;background:#434e61;border:1px solid #374050;border-radius:2.5px;"></div>
<div class="a " style="left:184px;top:654px;width:850px;height:24px;background:#3a4554;border-top:1px solid #2a303c;"></div>
<div class="a " style="left:244px;top:655px;width:1px;height:23px;background:#2a303c;"></div>
<div class="a " style="left:184px;top:654px;width:1px;height:24px;background:#2a303c;"></div>
<div class="a " style="left:267px;top:655px;width:89px;height:23px;background:#4a5a72;"></div>
<div class="a " style="left:356px;top:655px;width:1px;height:23px;background:#2a303c;"></div>
<div class="a " style="left:529px;top:655px;width:1px;height:23px;background:#2a303c;"></div>
<div class="a t" style="left:198px;top:657.4px;height:16px;line-height:16px;font-size:12px;color:#aab1bd;font-weight:400;transform-origin:0 50%;transform:scaleX(0.9486);">Model</div>
<div class="a t" style="left:271.4px;top:657.9px;height:15px;line-height:15px;font-size:11px;color:#fff;font-weight:700;transform-origin:0 50%;transform:scaleX(0.9214);">dwgmodels.com</div>
<div class="a t" style="left:536.2px;top:658.0px;height:16px;line-height:16px;font-size:12px;color:#b8bec9;font-weight:400;transform-origin:0 50%;transform:scaleX(0.9824);">108.9927, 93.7040 , 0.0000</div>
<div class="a " style="left:729px;top:656px;width:20px;height:20px;background:#5b8ecb;"></div>
<div class="a " style="left:751px;top:656px;width:20px;height:20px;background:#5b8ecb;"></div>
<div class="a " style="left:795px;top:656px;width:20px;height:20px;background:#5b8ecb;"></div>
<div class="a " style="left:817px;top:656px;width:20px;height:20px;background:#5b8ecb;"></div>
<div class="a " style="left:839px;top:656px;width:20px;height:20px;background:#5b8ecb;"></div>
<div class="a " style="left:861px;top:656px;width:20px;height:20px;background:#5b8ecb;"></div>
<div class="a " style="left:244px;top:629px;width:497px;height:25px;background:#4a5a72;"></div>
<div class="a " style="left:244px;top:629px;width:37px;height:25px;background:#3a4554;"></div>
<div class="a t" style="left:249.89999999999998px;top:632.0px;height:15px;line-height:15px;font-size:11px;color:#aeb5c0;font-weight:400;transform-origin:0 50%;transform:scaleX(1.1163);">&gt;_</div>
<svg class="a" style="left:265.5px;top:638px;" width="7" height="5" viewBox="0 0 7 5"><path d="M0 0.5h6.4L3.2 4.5z" fill="#aeb5c0"/></svg>
<div class="a t" style="left:286.5px;top:633.5px;height:15px;line-height:15px;font-size:11px;color:#fff;font-weight:700;transform-origin:0 50%;transform:scaleX(0.9214);">DRAWINGRECOVERY</div>
<svg class="a" style="left:701px;top:636px;" width="9" height="7" viewBox="0 0 9 7"><path d="M0.5 6.5L4.3 0.8L8.1 6.5z" fill="#8d97a6"/></svg>
<svg class="a" style="left:717px;top:633px;" width="14" height="16" viewBox="0 0 14 16"><path d="M4 5.5H1.8V14.5H11.8V5.5H9.6" fill="none" stroke="#dfe3e8" stroke-width="1.3"/><path d="M6.8 11V2" stroke="#6db8f0" stroke-width="1.5"/><path d="M3.9 4.2L6.8 0.6L9.7 4.2z" fill="#6db8f0"/></svg>
<div class="a " style="left:239.5px;top:624px;width:209px;height:32.3px;border:4.7px solid #fb2a0c;"></div>
<div class="a t" style="left:17.400000000000006px;top:106.44999999999999px;height:14.5px;line-height:14.5px;font-size:10.5px;color:#fff;font-weight:400;transform-origin:0 50%;transform:scaleX(0.9209);">Solid</div>
<div class="a t" style="left:17.400000000000006px;top:202.35px;height:14.5px;line-height:14.5px;font-size:10.5px;color:#fff;font-weight:400;transform-origin:0 50%;transform:scaleX(0.9120);">Surface</div>
<div class="a t" style="left:17.400000000000006px;top:298.45px;height:14.5px;line-height:14.5px;font-size:10.5px;color:#fff;font-weight:400;transform-origin:0 50%;transform:scaleX(0.8958);">Mesh</div>
<div class="a t" style="left:17.400000000000006px;top:394.55px;height:14.5px;line-height:14.5px;font-size:10.5px;color:#fff;font-weight:400;transform-origin:0 50%;transform:scaleX(0.9247);">UCS</div>
<div class="a t" style="left:76px;top:418.7px;height:15px;line-height:15px;font-size:11px;color:#8ccbf9;font-weight:700;transform-origin:0 50%;transform:scaleX(1.1585);">X</div>
<div class="a t" style="left:109.19999999999999px;top:421.55px;height:22.5px;line-height:22.5px;font-size:18.5px;color:#8ccbf9;font-weight:400;transform-origin:0 50%;transform:scaleX(0.9526);-webkit-text-stroke:0.6px #8ccbf9;">3</div>
<div class="a t" style="left:17.400000000000006px;top:466.35px;height:14.5px;line-height:14.5px;font-size:10.5px;color:#fff;font-weight:400;transform-origin:0 50%;transform:scaleX(0.9183);">Draw</div>
<div class="a t" style="left:17.400000000000006px;top:586.25px;height:14.5px;line-height:14.5px;font-size:10.5px;color:#fff;font-weight:400;transform-origin:0 50%;transform:scaleX(0.9701);">Modify</div>
<svg class="a" style="left:0;top:80px;overflow:hidden" width="184" height="574" viewBox="56 118 184 574"><path d="M61 149.5h7.8l-3.9 4.6z" fill="#fff"/><g transform="translate(230.2 151.7) scale(0.92)"><circle r="2.7" fill="none" stroke="#f4f4f4" stroke-width="2.2"/><rect x="-1.05" y="-5" width="2.1" height="3" fill="#f4f4f4" transform="rotate(0)"/><rect x="-1.05" y="-5" width="2.1" height="3" fill="#f4f4f4" transform="rotate(45)"/><rect x="-1.05" y="-5" width="2.1" height="3" fill="#f4f4f4" transform="rotate(90)"/><rect x="-1.05" y="-5" width="2.1" height="3" fill="#f4f4f4" transform="rotate(135)"/><rect x="-1.05" y="-5" width="2.1" height="3" fill="#f4f4f4" transform="rotate(180)"/><rect x="-1.05" y="-5" width="2.1" height="3" fill="#f4f4f4" transform="rotate(225)"/><rect x="-1.05" y="-5" width="2.1" height="3" fill="#f4f4f4" transform="rotate(270)"/><rect x="-1.05" y="-5" width="2.1" height="3" fill="#f4f4f4" transform="rotate(315)"/></g><g transform="translate(66 167)"><path d="M0 6.4L8 0H32L24.5 6.4z" fill="#f2f2f2"/><path d="M0 6.4H24.5V32H0z" fill="#e1e1e1"/><path d="M24.5 6.4L32 0V24.5L24.5 32z" fill="#bcbcbc"/></g><path d="M103 200.9V204.2H99.7z" fill="#8e9299"/><g transform="translate(111 167)"><path d="M0 6.3L5.2 0.3H24L18 6.3z" fill="#b9e0fc"/><path d="M0 6.3H18V26.6H0z" fill="#8ccbf9"/><path d="M18 6.3L24 0.3V21.5L18 26.6z" fill="#6cb0ea"/><path d="M0 27.6H18V32H0z" fill="#e1e1e1"/><path d="M18 27.6L24 22.5V27L18 32z" fill="#bcbcbc"/><path d="M27.4 25.5V4" stroke="#fff" stroke-width="1.1"/><path d="M25 6.2L27.4 1.4L29.8 6.2z" fill="#fff"/></g><path d="M147 200.9V204.2H143.7z" fill="#8e9299"/><g transform="translate(154 167)"><path d="M10 0H32V21.5H21.6V32H0V10.3H10z" fill="#8ccbf9"/></g><path d="M191 200.9V204.2H187.7z" fill="#8e9299"/><g transform="translate(196 164)"><path d="M1.300 6L3.800 3.300H12.800L10.100 6z" fill="#b9e0fc"/><path d="M1.300 6H10.100V14H1.300z" fill="#8ccbf9"/><path d="M10.100 6L12.800 3.300V11.300L10.100 14z" fill="#6cb0ea"/><path d="M7.500 3.800V0.800M6 2.200h3" stroke="#fff" stroke-width="1.100"/><path d="M-0.500 14.900H12M10.500 14.900L14.500 11M12 13.500H15.500" stroke="#e1e1e1" stroke-width="0.900" fill="none"/></g><g transform="translate(217 164)"><path d="M1 2.5L3.5 0.5V14L1 16z" fill="#f2f2f2"/><path d="M3.5 0.5H5V14L3.5 16z" fill="#bcbcbc"/><path d="M5.5 2L8 0H11V13.5L8.5 15.5H5.5z" fill="#8ccbf9"/><path d="M8.5 2.2L11 0V13.5L8.5 15.5z" fill="#6cb0ea"/><path d="M10.5 8H15" stroke="#fff" stroke-width="1.1"/><path d="M13 5.8L15.6 8L13 10.2z" fill="#fff"/></g><path d="M236.5 178.9V182.2H233.2z" fill="#8e9299"/><g transform="translate(196 186)"><path d="M0.5 6C0.5 2 4 0.5 7 0.5L11 6V16H0.5z" fill="#e1e1e1"/><path d="M11 6L16 7.5V13L11 16z" fill="#bcbcbc"/><path d="M6 0.5C11 0.3 15.5 3 16 8L11 7.5C11 5 9.5 3.5 7 3.5z" fill="#8ccbf9"/></g><path d="M214.5 200.9V204.2H211.2z" fill="#8e9299"/><g transform="translate(217 186)"><path d="M0.5 4L4 0.5H16V11L12.5 15.5H0.5z" fill="#e1e1e1"/><path d="M12.5 4L16 0.5V11L12.5 15.5z" fill="#bcbcbc"/><path d="M0.5 4H12.5V15.5H0.5z" fill="#f2f2f2"/><path d="M2.5 6H10.5V13.5H2.5z" fill="#8ccbf9"/><path d="M6.5 6H10.5V10H6.5z" fill="#39414f"/></g><path d="M236.5 200.9V204.2H233.2z" fill="#8e9299"/><g transform="translate(63 210)"><path d="M1 5.5L5 1.5H15V11.5L11 15.5H1z M1 5.5H11V15.5M11 5.5L15 1.5" fill="none" stroke="#8ccbf9" stroke-width="1.5" stroke-linejoin="round"/><path d="M5 2V10.5L1.5 14.5M5 10.5H14.5" stroke="#bcbcbc" stroke-width="0.8" fill="none"/><path d="M4 12l3 -2.3v3.5" stroke="#e1e1e1" stroke-width="0.9" fill="none"/></g><path d="M82 225.4V228.7H78.7z" fill="#8e9299"/><g transform="translate(85 210)"><path d="M0.5 0.5H10V10H0.5z" fill="#e1e1e1"/><path d="M6 6H15.5V15.5H6z" fill="#e1e1e1"/><path d="M5 4.5H12V11.5H5z" fill="#e86a6a"/></g><g transform="translate(107 210)"><path d="M1 3L3 0.5H15L13 3z" fill="#b9e0fc"/><path d="M1 3H13V7H1z" fill="#8ccbf9"/><path d="M13 3L15 0.5V5L13 7z" fill="#6cb0ea"/><path d="M0 8.5H16" stroke="#8ccbf9" stroke-width="1.2"/><path d="M1 10H13V15.5H1z" fill="#e1e1e1"/><path d="M13 10L15 8.5V13L13 15.5z" fill="#bcbcbc"/></g><g transform="translate(129 210)"><path d="M0.5 8.5L7 2.5C9 1 13 1 15.5 3.5L9 10C6 8 3 8 0.5 8.5z" fill="#bcbcbc"/><path d="M0.5 8.5C3 8 6 8 9 10L15.5 3.5V7.5L9 14.5C6 13 3 12.5 0.5 13z" fill="#8ccbf9"/><path d="M9 10L15.5 3.5V7.5L9 14.5z" fill="#6cb0ea"/></g><g transform="translate(151 210)"><path d="M0.5 5.5L2.5 3.5H9L7.5 5.5z" fill="#f2f2f2"/><path d="M0.5 5.5H7.5V12H0.5z" fill="#e1e1e1"/><path d="M7.5 5.5L9 4V11L7.5 12z" fill="#bcbcbc"/><path d="M9.5 5L13.5 1V10.5L9.5 14.5z" fill="#8ccbf9" stroke="#e1e1e1" stroke-width="0.7"/></g><path d="M170 225.4V228.7H166.7z" fill="#8e9299"/><g transform="translate(173 210)"><path d="M0.5 1.5H8.5V8.5H0.5z" fill="#e1e1e1"/><path d="M6 7H14V15.5H6z" fill="#8ccbf9"/><path d="M10.2 2.6A3.2 3.2 0 0 1 14.8 2" stroke="#4a96dd" stroke-width="1.3" fill="none"/><path d="M15.2 4.2A3.2 3.2 0 0 1 11 7" stroke="#e86a6a" stroke-width="1.3" fill="none"/><path d="M14 0l2 3l-3.2 0.3z" fill="#4a96dd"/><path d="M12.4 8.6l-2.6 -2l3 -1z" fill="#e86a6a"/></g><g transform="translate(195 210)"><path d="M0.7 0.7H15.3V15.3H0.7z" fill="none" stroke="#f0f0f0" stroke-width="1.2"/><path d="M3.5 6.5L6 4H12.5L10 6.5z" fill="#f2f2f2"/><path d="M3.5 6.5H10V11.5H3.5z" fill="#e1e1e1"/><path d="M10 6.5L12.5 4V9L10 11.5z" fill="#bcbcbc"/><path d="M7 13.2L13 6.8L15.3 9L9.3 15.4L6.5 16z" fill="#f0cd5c"/><path d="M12.2 7.6L13.4 6.3L15.8 8.5L14.6 9.8z" fill="#e86a6a"/></g><path d="M214 225.4V228.7H210.7z" fill="#8e9299"/><path d="M60 235.6H236.5" stroke="#262c37" stroke-width="1"/><path d="M61 245.4h7.8l-3.9 4.6z" fill="#fff"/><g transform="translate(230.2 247.6) scale(0.92)"><circle r="2.7" fill="none" stroke="#f4f4f4" stroke-width="2.2"/><rect x="-1.05" y="-5" width="2.1" height="3" fill="#f4f4f4" transform="rotate(0)"/><rect x="-1.05" y="-5" width="2.1" height="3" fill="#f4f4f4" transform="rotate(45)"/><rect x="-1.05" y="-5" width="2.1" height="3" fill="#f4f4f4" transform="rotate(90)"/><rect x="-1.05" y="-5" width="2.1" height="3" fill="#f4f4f4" transform="rotate(135)"/><rect x="-1.05" y="-5" width="2.1" height="3" fill="#f4f4f4" transform="rotate(180)"/><rect x="-1.05" y="-5" width="2.1" height="3" fill="#f4f4f4" transform="rotate(225)"/><rect x="-1.05" y="-5" width="2.1" height="3" fill="#f4f4f4" transform="rotate(270)"/><rect x="-1.05" y="-5" width="2.1" height="3" fill="#f4f4f4" transform="rotate(315)"/></g><g transform="translate(66 263)"><path d="M15.6 1.8L29.7 10.7Q17.2 17.5 15.6 29.9L1.900 21.700Q2.900 8 15.600 1.800z" fill="#f5b884"/><path d="M7 9.900L20.700 17M21.100 6Q11 13 8.100 23.600" fill="none" stroke="#c98a56" stroke-width="0.700"/></g><path d="M103 296.9V300.2H99.7z" fill="#8e9299"/><g transform="translate(110 263)"><path d="M3 9.900L12 0.900V7.500L3 15.400z" fill="#e6e6e6"/><path d="M19.100 25.200L28.200 17.700V22.800L19.100 31.900z" fill="#e6e6e6"/><path d="M12 7.500C12 10 12.500 11.900 15 11.900H25.400Q28.200 11.900 28.200 14.700V17.700L19.100 25.200C19.100 22.500 18.500 20.900 16 20.900H5.800Q3 20.900 3 18.200V15.400z" fill="#f5b884"/></g><path d="M147 296.9V300.2H143.7z" fill="#8e9299"/><g transform="translate(151 260)"><path d="M1 3.5L5 1H10L6 3.5z" fill="#e1e1e1"/><path d="M6 3.5L10 1C14 1.5 15 5 14.5 8L11 10C11.5 6.5 9.5 4 6 3.5z" fill="#f5b884"/><path d="M11 10L14.5 8V12L11 14.5z" fill="#e1e1e1"/></g><g transform="translate(173 260)"><path d="M1.5 1.5H10V5H1.5z" fill="#e1e1e1"/><path d="M1.5 9H13.5V15.5H1.5z" fill="#f5b884"/><path d="M0.3 8.8Q7.5 4.5 15.5 8.8" fill="none" stroke="#4a96dd" stroke-width="1.3"/><path d="M11.5 0.3L9 4.2h2.6L9.6 8.2l6 -5h-3l2.2 -2.9z" fill="#f6d23c"/></g><g transform="translate(195 260)"><path d="M6 0.5H15.5V10H6z" fill="#f5b884"/><circle cx="6.5" cy="10" r="6" fill="#f5b884"/><path d="M6.5 4H12.5V10H6.5z" fill="#fff"/><path d="M6.5 4A6 6 0 0 1 12.5 10H6.5z" fill="#8ccbf9"/></g><g transform="translate(217 260)"><path d="M0.5 10C1 5 3 3 5.5 2L8 4.5C6 6 5 9 5 15z" fill="#bcbcbc"/><path d="M5 15V6L9.8 1.2" fill="none" stroke="#8ccbf9" stroke-width="1.2"/><circle cx="9.8" cy="1.2" r="1.1" fill="#8ccbf9"/><circle cx="5" cy="15" r="1.1" fill="#8ccbf9"/><path d="M8.5 9A3.4 3.4 0 0 1 14 7" stroke="#4a96dd" stroke-width="1.3" fill="none"/><path d="M15.2 9.5A3.4 3.4 0 0 1 10 13" stroke="#e86a6a" stroke-width="1.3" fill="none"/><path d="M13 5l2.6 2.6l-3.4 0.8z" fill="#4a96dd"/><path d="M11.6 14.8l-2.8 -2.3l3.2 -1z" fill="#e86a6a"/></g><g transform="translate(151 282)"><path d="M2 0.5H13.5V5H2z" fill="#e1e1e1"/><path d="M2 9.5H13.5V15.5H2z" fill="#f5b884"/><path d="M0.3 8.2Q8 3.2 15.7 8.2" fill="none" stroke="#4a96dd" stroke-width="1.3"/></g><path d="M170 296.9V300.2H166.7z" fill="#8e9299"/><g transform="translate(173 282)"><path d="M0.5 0.5H15.5V11H0.5z" fill="#f5b884"/><path d="M0.5 12.5H15.5V16H0.5z" fill="#e1e1e1"/><path d="M8 11V5" stroke="#fff" stroke-width="2"/><path d="M4.6 6.2L8 1.5L11.4 6.2z" fill="#fff"/><path d="M8 11V5M4.6 6.2L8 1.5L11.4 6.2z" fill="none" stroke="#555" stroke-width="0.4"/></g><g transform="translate(195 282)"><path d="M0.5 1.5H8.5V8.5H0.5z" fill="#e1e1e1"/><path d="M6.5 7.5H14V15.5H6.5z" fill="#f5b884"/><path d="M10.2 2.8A3.2 3.2 0 0 1 14.8 2.2" stroke="#4a96dd" stroke-width="1.3" fill="none"/><path d="M15.4 4.4A3.2 3.2 0 0 1 11.2 7.2" stroke="#e86a6a" stroke-width="1.3" fill="none"/><path d="M14 0.2l2 3l-3.2 0.3z" fill="#4a96dd"/><path d="M12.6 8.8l-2.6 -2l3 -1z" fill="#e86a6a"/></g><g transform="translate(217 282)"><path d="M6.5 2.5H16L12 6.5H2.5z" fill="#e1e1e1"/><path d="M4.5 10.5H14L10 14.5H0.5z" fill="#e1e1e1"/><path d="M2 1V8.5H15.5" fill="none" stroke="#8ccbf9" stroke-width="1.4"/><circle cx="2" cy="1.2" r="1.1" fill="#8ccbf9"/><circle cx="15.3" cy="8.5" r="1.1" fill="#8ccbf9"/></g><g transform="translate(63 306)"><path d="M0.5 10C1 5 3 3 5.5 2L8 4.5C6 6 5 9 5 14z" fill="#bcbcbc"/><path d="M5 15V6L9.8 1.2" fill="none" stroke="#8ccbf9" stroke-width="1.2"/><circle cx="9.8" cy="1.2" r="1.1" fill="#8ccbf9"/><circle cx="5" cy="15" r="1.1" fill="#8ccbf9"/><circle cx="11.5" cy="9.5" r="3.6" fill="#f6d765"/><path d="M9.8 13.2h3.4l-0.6 2.5h-2.2z" fill="#f4f4f4"/></g><path d="M82 321.4V324.7H78.7z" fill="#8e9299"/><g transform="translate(85 306)"><path d="M3 14.5L11.5 4" stroke="#f5b884" stroke-width="2.2"/><path d="M7.5 3.5C9.5 0.8 13 1 15.5 4L13.5 5.5C12.5 4.5 11.5 4.5 10.5 5.5z" fill="#bcbcbc"/><path d="M1 1.8L3 1L6 3.5L5.5 5.5L12.5 12C14 11.5 15.5 12.5 15.7 14.5L14 13.5L12.8 14.8L14 16C12 16.3 10.5 15 10.8 13.5L4 7C2.5 7.3 1 6.2 1 4.5L2.5 5.3L3.6 4z" fill="#e1e1e1"/></g><g transform="translate(107 306)"><path d="M0.5 8C5 4 11 4 15.5 8L13.5 11C10 8.5 6 8.5 2.5 11z" fill="#bcbcbc"/><path d="M1 5L4 2.5H12L15 5" fill="none" stroke="#ccc" stroke-width="0.7" stroke-dasharray="1 1"/><circle cx="4.5" cy="2.5" r="1.2" fill="#8ccbf9"/><circle cx="8" cy="1.5" r="1.2" fill="#8ccbf9"/><circle cx="11.5" cy="2.5" r="1.2" fill="#8ccbf9"/><path d="M10.5 9.5V16.5M7 13H14" stroke="#3fc45a" stroke-width="2"/></g><g transform="translate(129 306)"><path d="M0.5 8C5 4 11 4 15.5 8L13.5 11C10 8.5 6 8.5 2.5 11z" fill="#bcbcbc"/><path d="M1 5L4 2.5H12L15 5" fill="none" stroke="#ccc" stroke-width="0.7" stroke-dasharray="1 1"/><circle cx="4.5" cy="2.5" r="1.2" fill="#8ccbf9"/><circle cx="8" cy="1.5" r="1.2" fill="#8ccbf9"/><circle cx="11.5" cy="2.5" r="1.2" fill="#8ccbf9"/><path d="M7 13.5H14.5" stroke="#ea5560" stroke-width="2"/></g><g transform="translate(151 306)"><path d="M0.3 0.3H15.7V15.7H0.3z" fill="#e1e1e1"/><path d="M2 1.5Q9 8 2 14.5" fill="none" stroke="#555" stroke-width="2"/><path d="M6.5 1Q14 8 6.5 15" fill="none" stroke="#555" stroke-width="2.2"/><path d="M11.5 1Q17 8 11.5 15" fill="none" stroke="#555" stroke-width="2"/></g><path d="M170 321.4V324.7H166.7z" fill="#8e9299"/><g transform="translate(173 306)"><defs><linearGradient id="rb" x1="0" y1="0" x2="0" y2="1"><stop offset="0" stop-color="#f0608a"/><stop offset="0.3" stop-color="#f6b36a"/><stop offset="0.5" stop-color="#f3e47a"/><stop offset="0.7" stop-color="#8fdc8a"/><stop offset="1" stop-color="#6bb6f5"/></linearGradient></defs><path d="M0.5 0.3H10V14H0.5z" fill="url(#rb)"/><path d="M7 8.5H15.7V16H7z" fill="#f0f0f0"/><path d="M7 8.5H15.7V10.3H7z" fill="#9a9a9a"/><path d="M8.6 12h1.4M11 12h3.5M8.6 14h1.4M11 14h3.5" stroke="#555" stroke-width="1"/></g><path d="M60 331.2H236.5" stroke="#262c37" stroke-width="1"/><path d="M61 341.5h7.8l-3.9 4.6z" fill="#fff"/><g transform="translate(230.2 343.7) scale(0.92)"><circle r="2.7" fill="none" stroke="#f4f4f4" stroke-width="2.2"/><rect x="-1.05" y="-5" width="2.1" height="3" fill="#f4f4f4" transform="rotate(0)"/><rect x="-1.05" y="-5" width="2.1" height="3" fill="#f4f4f4" transform="rotate(45)"/><rect x="-1.05" y="-5" width="2.1" height="3" fill="#f4f4f4" transform="rotate(90)"/><rect x="-1.05" y="-5" width="2.1" height="3" fill="#f4f4f4" transform="rotate(135)"/><rect x="-1.05" y="-5" width="2.1" height="3" fill="#f4f4f4" transform="rotate(180)"/><rect x="-1.05" y="-5" width="2.1" height="3" fill="#f4f4f4" transform="rotate(225)"/><rect x="-1.05" y="-5" width="2.1" height="3" fill="#f4f4f4" transform="rotate(270)"/><rect x="-1.05" y="-5" width="2.1" height="3" fill="#f4f4f4" transform="rotate(315)"/></g><g transform="translate(66 359)"><path d="M1 6L6 1H30L25 6z" fill="#f6e4a4"/><path d="M1 6H25V30H1z" fill="#ecd07a"/><path d="M25 6L30 1V25L25 30z" fill="#cfae52"/><path d="M13 6V30M1 18H25M25 18L30 13M13 6L18 1M27.5 3.5V27.5" stroke="#b8983e" stroke-width="0.6" fill="none"/></g><path d="M103 392.9V396.2H99.7z" fill="#8e9299"/><g transform="translate(107 356)"><path d="M1 7C1 3 15 3 15 7V12L11 15H5L1 12z" fill="#ecd07a"/><path d="M11 10L15 7V12L11 15z" fill="#d8d8d8"/><ellipse cx="8" cy="7" rx="4" ry="1.8" fill="#cfae52"/><path d="M4 8V13.5M8 9V15M11 9.5V15" stroke="#b8983e" stroke-width="0.6"/><path d="M2.5 3.5Q8 -0.5 14.5 3" fill="none" stroke="#eee" stroke-width="1"/><path d="M0.8 4.2L3.5 1.2L4 4.6z" fill="#eee"/></g><g transform="translate(129 356)"><path d="M1 9L9 1L15.5 6.5L10 9.5L6 15.5z" fill="#ecd07a"/><path d="M5 5L10 9.5M3.5 12L7.5 7L12.5 4" stroke="#b8983e" stroke-width="0.6" fill="none"/></g><g transform="translate(107 378)"><path d="M1 0.5C9 1 15.5 7 16 15.5H8.5C8.5 11 5.5 8 1 7.5z" fill="#ecd07a"/><path d="M6 1.5L4 8M11.5 4.5L7 10.5M15 10L8.5 12.5" stroke="#b8983e" stroke-width="0.6"/></g><g transform="translate(129 378)"><path d="M5.5 0.5H14C11 5 15.5 10 13 15.5H5.5C8.5 10 3 5 5.5 0.5z" fill="#ecd07a"/><path d="M3 0.5C0 5 6 10 3 15.5" fill="none" stroke="#eee" stroke-width="1.1"/><path d="M6 5.5H13M8 10.5H14.5M9.5 0.5C7.5 5 12 10 9.5 15.5" stroke="#b8983e" stroke-width="0.6" fill="none"/></g><g transform="translate(154 359)"><defs><radialGradient id="sp" cx="0.4" cy="0.3" r="0.75"><stop offset="0" stop-color="#f6e4a4"/><stop offset="0.6" stop-color="#ecd07a"/><stop offset="1" stop-color="#c9a648"/></radialGradient></defs><circle cx="15.5" cy="15.5" r="15.5" fill="url(#sp)"/><path d="M0.3 15Q15.5 24 30.7 15M3 7Q15.5 13 28 7M10 1.2Q5 8 6.5 18M21 1.2Q26 8 24.5 18M15.5 0V10.5" fill="none" stroke="#b8983e" stroke-width="0.6"/></g><g transform="translate(195 356)"><circle cx="7.5" cy="8" r="7.5" fill="#ecd07a"/><path d="M0.2 8Q7.5 12 14.8 8M1.5 4Q7.5 7 13.5 4M4.5 1.2Q2.5 5 3.2 10M10.5 1.2Q12.5 5 11.8 10M7.5 0.5V10" fill="none" stroke="#b8983e" stroke-width="0.55"/><path d="M12 7.5V16.5M7.5 12H16.5" stroke="#3fc45a" stroke-width="2.2"/></g><g transform="translate(217 356)"><circle cx="7.5" cy="8" r="7.5" fill="#ecd07a"/><path d="M0.2 8Q7.5 12 14.8 8M1.5 4Q7.5 7 13.5 4M4.5 1.2Q2.5 5 3.2 10M10.5 1.2Q12.5 5 11.8 10M7.5 0.5V10" fill="none" stroke="#b8983e" stroke-width="0.55"/><path d="M1.5 14L15 1.5" stroke="#f4f4f4" stroke-width="2.4"/><path d="M1.5 14L15 1.5" stroke="#555" stroke-width="0.6"/></g><g transform="translate(195 378)"><circle cx="7.5" cy="8" r="7.5" fill="#ecd07a"/><path d="M0.2 8Q7.5 12 14.8 8M1.5 4Q7.5 7 13.5 4M4.5 1.2Q2.5 5 3.2 10M10.5 1.2Q12.5 5 11.8 10M7.5 0.5V10" fill="none" stroke="#b8983e" stroke-width="0.55"/><path d="M8 12H16.5" stroke="#ea5560" stroke-width="2.2"/></g><g transform="translate(217 378)"><path d="M0.5 8C0.5 3 5 1.5 9 1.5L15.5 0.5V9C15.5 13 12 15.5 8 15.5C4 15.5 0.5 12.5 0.5 8z" fill="#ecd07a"/><path d="M8.5 7.5L15.8 0.3" stroke="#8ccbf9" stroke-width="1.2"/><path d="M0.5 8Q4 7 8.5 7.5V15.5" stroke="#b8983e" stroke-width="0.6" fill="none"/></g><path d="M236.5 392.9V396.2H233.2z" fill="#8e9299"/><g transform="translate(63 402)"><path d="M2.5 7L5 4.5H14L11.5 7z" fill="#f6e4a4"/><path d="M2.5 7H11.5V13.5H2.5z" fill="#ecd07a"/><path d="M11.5 7L14 4.5V11L11.5 13.5z" fill="#cfae52"/><path d="M8.4 4V0.6M6.8 2.2h3.2" stroke="#fff" stroke-width="1.1"/><path d="M0.5 15H13M11 15l3.5 -3.5M12 13.5h3" stroke="#e1e1e1" stroke-width="0.9" fill="none"/></g><g transform="translate(85 402)"><path d="M0.5 3.5H15.5V13H0.5z" fill="#ecd07a"/><path d="M4 16L12 0.3" stroke="#8ccbf9" stroke-width="1.3"/></g><g transform="translate(107 402)"><path d="M0.5 0.3H9.5V7H0.5z" fill="#ecd07a"/><path d="M5 0.3V7" stroke="#b8983e" stroke-width="0.6"/><path d="M2 9V12.5H5.5" fill="none" stroke="#f4f4f4" stroke-width="1.1"/><path d="M4.6 10.8L6.8 12.5L4.6 14.2z" fill="#f4f4f4"/><path d="M7.5 9H16.5V16H7.5z" fill="#ecd07a"/></g><g transform="translate(129 402)"><path d="M1 0.8H9.5V6.8H1z" fill="none" stroke="#ecd07a" stroke-width="1.1"/><path d="M3.6 2.9H7V4.7H3.6z" fill="none" stroke="#ecd07a" stroke-width="0.9"/><path d="M2 9V12.5H5.5" fill="none" stroke="#f4f4f4" stroke-width="1.1"/><path d="M4.6 10.8L6.8 12.5L4.6 14.2z" fill="#f4f4f4"/><path d="M7.5 9H16.5V16H7.5z" fill="#ecd07a"/></g><g transform="translate(151 402)"><path d="M1 0.8H9.5V6.8H1zM1 3.8H9.5" fill="none" stroke="#ecd07a" stroke-width="1.1"/><path d="M2 9V12.5H5.5" fill="none" stroke="#f4f4f4" stroke-width="1.1"/><path d="M4.6 10.8L6.8 12.5L4.6 14.2z" fill="#f4f4f4"/><path d="M8 9.5H16V15.7H8zM8 9.5L16 15.7M16 9.5L8 15.7" fill="none" stroke="#ecd07a" stroke-width="1.1"/></g><g transform="translate(173 402)"><path d="M1 0.8H9.5V6.8H1z" fill="none" stroke="#ecd07a" stroke-width="1.1"/><path d="M9.5 0.8V6.8H2.5z" fill="#ecd07a"/><path d="M2 9V12.5H5.5" fill="none" stroke="#f4f4f4" stroke-width="1.1"/><path d="M4.6 10.8L6.8 12.5L4.6 14.2z" fill="#f4f4f4"/><path d="M8 9.5H16V15.7H8zM8 9.5L16 15.7" fill="none" stroke="#ecd07a" stroke-width="1.1"/></g><path d="M60 427.2H236.5" stroke="#262c37" stroke-width="1"/><path d="M61 437.6h7.8l-3.9 4.6z" fill="#fff"/><g transform="translate(230.2 439.8) scale(0.92)"><circle r="2.7" fill="none" stroke="#f4f4f4" stroke-width="2.2"/><rect x="-1.05" y="-5" width="2.1" height="3" fill="#f4f4f4" transform="rotate(0)"/><rect x="-1.05" y="-5" width="2.1" height="3" fill="#f4f4f4" transform="rotate(45)"/><rect x="-1.05" y="-5" width="2.1" height="3" fill="#f4f4f4" transform="rotate(90)"/><rect x="-1.05" y="-5" width="2.1" height="3" fill="#f4f4f4" transform="rotate(135)"/><rect x="-1.05" y="-5" width="2.1" height="3" fill="#f4f4f4" transform="rotate(180)"/><rect x="-1.05" y="-5" width="2.1" height="3" fill="#f4f4f4" transform="rotate(225)"/><rect x="-1.05" y="-5" width="2.1" height="3" fill="#f4f4f4" transform="rotate(270)"/><rect x="-1.05" y="-5" width="2.1" height="3" fill="#f4f4f4" transform="rotate(315)"/></g><path d="M69.3 460.5V483.7H92.3" fill="none" stroke="#e4e4e4" stroke-width="1.2"/><path d="M65.7 461.2L69.3 455L72.89999999999999 461.2z" fill="#e4e4e4"/><path d="M91.8 480.1L98.1 483.7L91.8 487.3z" fill="#e4e4e4"/><circle cx="82" cy="470" r="9.2" fill="#8ccbf9"/><path d="M76 463.5c2 -1.5 4 -0.5 5.5 0.5c1.5 1 0.5 2.5 -1 3c-1 0.5 -1 2 0.5 2.5c2 0.8 2.5 2.5 1.5 4.5c-0.8 1.8 -2 3 -2.500 4.500c-1 -1.500 -1.500 -3.500 -2 -5c-0.700 -1.800 -2.800 -2.200 -3.500 -4.200c-0.600 -2 0.200 -4.300 1.500 -5.800zM85 462.500c2 0.500 4.200 2.200 5 4.500c-1.500 -0.200 -2.500 0.800 -3.800 0.200c-1.200 -0.600 -1.700 -3 -1.200 -4.700zM86.500 471c1.500 -0.800 3.200 0 4.300 1c-0.300 2 -1.300 3.800 -2.800 5c-0.700 -1.800 -2.300 -4 -1.500 -6z" fill="#4a96dd"/><path d="M113 460.5V483.7H136" fill="none" stroke="#e4e4e4" stroke-width="1.2"/><path d="M109.4 461.2L113 455L116.6 461.2z" fill="#e4e4e4"/><path d="M135.5 480.1L141.8 483.7L135.5 487.3z" fill="#e4e4e4"/><path d="M131.2 465.6A6.6 6.600 0 1 0 133 469" fill="none" stroke="#e4e4e4" stroke-width="1.200"/><path d="M128.800 462.300L133.300 465.200L128.600 467.600z" fill="#e4e4e4"/><path d="M147.3 488.7V492.0H144.0z" fill="#8e9299"/><path d="M157.2 460.5V483.7H180.2" fill="none" stroke="#e4e4e4" stroke-width="1.2"/><path d="M153.6 461.2L157.2 455L160.79999999999998 461.2z" fill="#e4e4e4"/><path d="M179.7 480.1L186.0 483.7L179.7 487.3z" fill="#e4e4e4"/><path d="M191.3 488.7V492.0H188.0z" fill="#8e9299"/><path d="M60 499.7H236.5" stroke="#262c37" stroke-width="1"/><path d="M61 509.40000000000003h7.8l-3.9 4.6z" fill="#fff"/><g transform="translate(230.2 511.6) scale(0.92)"><circle r="2.7" fill="none" stroke="#f4f4f4" stroke-width="2.2"/><rect x="-1.05" y="-5" width="2.1" height="3" fill="#f4f4f4" transform="rotate(0)"/><rect x="-1.05" y="-5" width="2.1" height="3" fill="#f4f4f4" transform="rotate(45)"/><rect x="-1.05" y="-5" width="2.1" height="3" fill="#f4f4f4" transform="rotate(90)"/><rect x="-1.05" y="-5" width="2.1" height="3" fill="#f4f4f4" transform="rotate(135)"/><rect x="-1.05" y="-5" width="2.1" height="3" fill="#f4f4f4" transform="rotate(180)"/><rect x="-1.05" y="-5" width="2.1" height="3" fill="#f4f4f4" transform="rotate(225)"/><rect x="-1.05" y="-5" width="2.1" height="3" fill="#f4f4f4" transform="rotate(270)"/><rect x="-1.05" y="-5" width="2.1" height="3" fill="#f4f4f4" transform="rotate(315)"/></g><path d="M67.2 550.5H87.6A10.2 7.450 0 0 0 87.600 535.600" fill="none" stroke="#e4e4e4" stroke-width="1.100"/><rect x="65.60000000000001" y="548.9" width="3.2" height="3.2" fill="#8ccbf9"/><rect x="86.0" y="548.9" width="3.2" height="3.2" fill="#8ccbf9"/><rect x="86.0" y="534.0" width="3.2" height="3.2" fill="#8ccbf9"/><circle cx="125.4" cy="542.5" r="15.5" fill="none" stroke="#e4e4e4" stroke-width="1.1"/><path d="M125.4 542.5L132.5 535.5" stroke="#8ccbf9" stroke-width="1.2"/><path d="M135.2 533L133.700 538L130.200 534.500z" fill="#8ccbf9"/><rect x="123.80000000000001" y="540.9" width="3.2" height="3.2" fill="#8ccbf9"/><path d="M147.3 560.7V564.0H144.0z" fill="#8e9299"/><path d="M155.2 532.4H184.8V553.7H155.200z" fill="none" stroke="#e4e4e4" stroke-width="1.100"/><rect x="153.6" y="530.8" width="3.2" height="3.2" fill="#8ccbf9"/><rect x="183.20000000000002" y="552.1" width="3.2" height="3.2" fill="#8ccbf9"/><path d="M191.3 560.7V564.0H188.0z" fill="#8e9299"/><path d="M198 554.5L210 543.3H230.200L222 554.500z" fill="#e1e1e1"/><path d="M214.500 549.400V532.400H228.600" fill="none" stroke="#fff" stroke-width="1.100"/><rect x="212.9" y="547.8" width="3.2" height="3.2" fill="#8ccbf9"/><rect x="212.9" y="530.8" width="3.2" height="3.2" fill="#8ccbf9"/><rect x="227.0" y="530.8" width="3.2" height="3.2" fill="#8ccbf9"/><g transform="translate(63 570)"><path d="M1.5 14C2 7 7 2 14.500 1" fill="none" stroke="#e4e4e4" stroke-width="1.100" stroke-dasharray="3.500 2.500"/><rect x="0.30000000000000004" y="12.8" width="2.4" height="2.4" fill="#8ccbf9"/><rect x="4.3" y="4.3" width="2.4" height="2.4" fill="#8ccbf9"/><rect x="13.3" y="-0.19999999999999996" width="2.4" height="2.4" fill="#8ccbf9"/></g><path d="M82 585.7V589.0H78.7z" fill="#8e9299"/><g transform="translate(85 570)"><path d="M1.500 15C2 8 3.500 4 5 4.500S10 12 11.500 11S14 5 15 0.500" fill="none" stroke="#e4e4e4" stroke-width="1.100" stroke-dasharray="5 1.500"/><rect x="0.30000000000000004" y="13.8" width="2.4" height="2.4" fill="#8ccbf9"/><rect x="3.5999999999999996" y="3.3999999999999995" width="2.4" height="2.4" fill="#8ccbf9"/><rect x="10.5" y="9.8" width="2.4" height="2.4" fill="#8ccbf9"/><rect x="13.8" y="-0.5" width="2.4" height="2.4" fill="#8ccbf9"/></g><path d="M104 585.7V589.0H100.7z" fill="#8e9299"/><g transform="translate(107 570)"><path d="M1 15L15 1" stroke="#e4e4e4" stroke-width="1.100"/><rect x="-0.19999999999999996" y="13.8" width="2.4" height="2.4" fill="#8ccbf9"/><rect x="13.8" y="-0.19999999999999996" width="2.4" height="2.4" fill="#8ccbf9"/></g><g transform="translate(129 570)"><ellipse cx="8" cy="8.500" rx="7.300" ry="4.800" fill="none" stroke="#e4e4e4" stroke-width="1.100"/><rect x="6.9" y="2.6" width="2.2" height="2.2" fill="#8ccbf9"/><rect x="6.9" y="7.4" width="2.2" height="2.2" fill="#8ccbf9"/><rect x="13.4" y="7.4" width="2.2" height="2.2" fill="#8ccbf9"/></g><path d="M148 585.7V589.0H144.7z" fill="#8e9299"/><g transform="translate(151 570)"><ellipse cx="8.500" cy="3.500" rx="6" ry="2.300" fill="none" stroke="#e4e4e4" stroke-width="1.100"/><ellipse cx="8.500" cy="7.200" rx="6" ry="2.300" fill="none" stroke="#e4e4e4" stroke-width="1.100"/><ellipse cx="8.500" cy="10.900" rx="6" ry="2.300" fill="none" stroke="#e4e4e4" stroke-width="1.100"/><path d="M2.500 14.500C6 16 12 15.500 14.500 13" fill="none" stroke="#e4e4e4" stroke-width="1.100"/><rect x="1.0999999999999999" y="0.30000000000000004" width="2.4" height="2.4" fill="#8ccbf9"/><rect x="1.0999999999999999" y="13.3" width="2.4" height="2.4" fill="#8ccbf9"/></g><g transform="translate(173 570)"><rect x="0.800" y="2.500" width="14.600" height="11.500" rx="2.500" fill="none" stroke="#e4e4e4" stroke-width="1.100" stroke-dasharray="2.500 1.200"/></g><path d="M192 585.7V589.0H188.7z" fill="#8e9299"/><g transform="translate(195 570)"><circle cx="8" cy="8" r="5.400" fill="none" stroke="#e1e1e1" stroke-width="5.200"/></g><g transform="translate(217 570)"><path d="M3 3.500H13M3 12.500H13" stroke="#e4e4e4" stroke-width="1.100"/><path d="M0 8H16" stroke="#8ccbf9" stroke-width="1.200" stroke-dasharray="6.500 1 1.500 1"/></g><path d="M236 585.7V589.0H232.7z" fill="#8e9299"/><g transform="translate(63 594)"><path d="M1 1L8 8L15 1.500M8 8L1 15" fill="none" stroke="#e4e4e4" stroke-width="1.100"/><rect x="6.8" y="6.8" width="2.4" height="2.4" fill="#8ccbf9"/></g><path d="M82 609.7V613.0H78.7z" fill="#8e9299"/><g transform="translate(85 594)"><path d="M3 13L13 3" stroke="#e4e4e4" stroke-width="1.100" stroke-dasharray="2.500 1.800"/><path d="M15.500 0.500L14.300 5L11 1.700z" fill="#e4e4e4"/><path d="M0.500 15.500L1.700 11L5 14.300z" fill="#e4e4e4"/><rect x="6.9" y="6.9" width="2.2" height="2.2" fill="#8ccbf9"/><rect x="10.200000000000001" y="3.6" width="2.2" height="2.2" fill="#8ccbf9"/><rect x="3.6" y="10.200000000000001" width="2.2" height="2.2" fill="#8ccbf9"/></g><path d="M104 609.7V613.0H100.7z" fill="#8e9299"/><g transform="translate(107 594)"><path d="M0.500 3.500L12.500 15.500M4 0.500L15.500 12" stroke="#e4e4e4" stroke-width="1.100"/><rect x="3.0" y="-0.29999999999999993" width="2.4" height="2.4" fill="#8ccbf9"/><rect x="13.8" y="10.5" width="2.4" height="2.4" fill="#8ccbf9"/></g><g transform="translate(129 594)"><path d="M0.500 8H5L7 3.500L9.500 13.500L11.500 8H16" fill="none" stroke="#e4e4e4" stroke-width="1.100"/></g><path d="M60 619.8H236.5" stroke="#262c37" stroke-width="1"/><path d="M61 629.3h7.8l-3.9 4.6z" fill="#fff"/><g transform="translate(230.2 631.5) scale(0.92)"><circle r="2.7" fill="none" stroke="#f4f4f4" stroke-width="2.2"/><rect x="-1.05" y="-5" width="2.1" height="3" fill="#f4f4f4" transform="rotate(0)"/><rect x="-1.05" y="-5" width="2.1" height="3" fill="#f4f4f4" transform="rotate(45)"/><rect x="-1.05" y="-5" width="2.1" height="3" fill="#f4f4f4" transform="rotate(90)"/><rect x="-1.05" y="-5" width="2.1" height="3" fill="#f4f4f4" transform="rotate(135)"/><rect x="-1.05" y="-5" width="2.1" height="3" fill="#f4f4f4" transform="rotate(180)"/><rect x="-1.05" y="-5" width="2.1" height="3" fill="#f4f4f4" transform="rotate(225)"/><rect x="-1.05" y="-5" width="2.1" height="3" fill="#f4f4f4" transform="rotate(270)"/><rect x="-1.05" y="-5" width="2.1" height="3" fill="#f4f4f4" transform="rotate(315)"/></g><path d="M81.4 649.4L94.9 657.0V671.4L81.4 678.5999999999999L67.9 671.4V657.0z" fill="none" stroke="#d6d6d6" stroke-width="1.0"/><path d="M81.4 663.3V649.4" stroke="#8ccbf9" stroke-width="1.1"/><path d="M81.4 663.3L67.9 671.4" stroke="#3fc45a" stroke-width="1.1"/><path d="M81.4 663.3L94.9 671.4" stroke="#f07070" stroke-width="1.1"/><rect x="79.30000000000001" y="647.3" width="4.2" height="4.2" fill="#3a4554" stroke="#8ccbf9" stroke-width="1.0"/><rect x="65.80000000000001" y="669.3" width="4.2" height="4.2" fill="#3a4554" stroke="#5fdc78" stroke-width="1.0"/><rect x="92.80000000000001" y="669.3" width="4.2" height="4.2" fill="#3a4554" stroke="#f58080" stroke-width="1.0"/><rect x="79.30000000000001" y="661.1999999999999" width="4.2" height="4.2" fill="#3a4554" stroke="#ffffff" stroke-width="1.0"/><path d="M102.9 680.9V684.2H99.6z" fill="#8e9299"/><path d="M114.7 645.65L121.45 649.45V656.65L114.7 660.25L107.95 656.65V649.45z" fill="none" stroke="#d6d6d6" stroke-width="0.9"/><path d="M114.7 652.6V645.65" stroke="#8ccbf9" stroke-width="1.0"/><path d="M114.7 652.6L107.95 656.65" stroke="#3fc45a" stroke-width="1.0"/><path d="M114.7 652.6L121.45 656.65" stroke="#f07070" stroke-width="1.0"/><rect x="113.5" y="644.4499999999999" width="2.4" height="2.4" fill="#3a4554" stroke="#8ccbf9" stroke-width="0.9"/><rect x="106.75" y="655.4499999999999" width="2.4" height="2.4" fill="#3a4554" stroke="#5fdc78" stroke-width="0.9"/><rect x="120.25" y="655.4499999999999" width="2.4" height="2.4" fill="#3a4554" stroke="#f58080" stroke-width="0.9"/><rect x="113.5" y="651.4" width="2.4" height="2.4" fill="#3a4554" stroke="#ffffff" stroke-width="0.9"/><g transform="translate(129 644)"><path d="M2 9H13.200V13.700H2z" fill="#e1e1e1"/><path d="M7.300 0.900H13.200V8.600H7.300z" fill="#8ccbf9"/></g><g transform="translate(151 644)"><path d="M0.500 5C0.500 2.500 3 1.500 6 2.500V12C3 11 0.500 12 0.500 13z" fill="#e1e1e1"/><path d="M3.500 3.500L6 2.500V12L3.500 13z" fill="#bcbcbc"/><path d="M7.600 0V15.500" stroke="#fff" stroke-width="1.100"/><path d="M9.300 2.500C12 1.500 15.500 2.500 15.500 5V13C15.500 12 12 11 9.300 12z" fill="#8ccbf9"/></g><g transform="translate(173 644)"><path d="M8 2V14M2 8H14" stroke="#fff" stroke-width="1.300"/><path d="M5.600 3.400L8 0.300L10.400 3.400zM5.600 12.600L8 15.700L10.400 12.600zM3.400 5.600L0.300 8L3.400 10.400zM12.600 5.600L15.700 8L12.600 10.400z" fill="#fff"/></g><g transform="translate(195 644)"><path d="M6.500 2V14H1z" fill="none" stroke="#e1e1e1" stroke-width="1.100"/><path d="M9 2V14H14.500z" fill="none" stroke="#8ccbf9" stroke-width="1.100"/></g><g transform="translate(217 644)"><path d="M1.500 1.500H11.500V11.500H1.500z" fill="none" stroke="#f4f4f4" stroke-width="1.200" stroke-dasharray="2.600 1.400"/><rect x="5" y="5" width="3" height="3" fill="#f4f4f4"/><path d="M9.500 7L16.500 13L13 13.300L11.200 16.500z" fill="#fff"/><path d="M14.500 4.500v3M13 6h3" stroke="#f4f4f4" stroke-width="0.800"/></g><g transform="translate(107 666)"><circle cx="8" cy="8" r="7.300" fill="none" stroke="#3fc45a" stroke-width="1.100"/><ellipse cx="8" cy="8" rx="7.300" ry="3.200" fill="none" stroke="#4a96dd" stroke-width="1.100"/><ellipse cx="8" cy="8" rx="3.200" ry="7.300" fill="none" stroke="#f07070" stroke-width="1.100"/><rect x="5.800" y="5.800" width="4.400" height="4.400" fill="#3a4554" stroke="#fff" stroke-width="0.900"/><rect x="7.200" y="7.200" width="1.600" height="1.600" fill="#fff"/></g><g transform="translate(129 666)"><path d="M0.500 3.500L2.500 1V14L0.500 16z" fill="#f2f2f2"/><path d="M2.500 13L5.500 10H16V12.500L13.500 15.500H2.500z" fill="#e1e1e1"/><path d="M13.500 12.500L16 10V12.500L13.500 15.500z" fill="#bcbcbc"/><path d="M4.500 5L6.500 3H11.500L9.500 5z" fill="#b9e0fc"/><path d="M4.500 5H9.500V10.500H4.500z" fill="#8ccbf9"/><path d="M9.500 5L11.500 3V8.500L9.500 10.500z" fill="#6cb0ea"/></g><g transform="translate(151 666)"><path d="M1 5L4 2H15.500L12.500 5z" fill="#f2f2f2"/><path d="M12.500 5L15.500 2V12.500L12.500 15.500z" fill="#bcbcbc"/><path d="M1 5H6.300V9.800H1z" fill="#8ccbf9"/><path d="M7.200 5H12.500V9.800H7.200z" fill="#e1e1e1"/><path d="M1 10.700H6.300V15.500H1z" fill="#8ccbf9"/><path d="M7.200 10.700H12.500V15.500H7.200z" fill="#8ccbf9"/><path d="M6.700 5L9.700 2" stroke="#3a4554" stroke-width="0.800"/></g><g transform="translate(173 666)"><circle cx="3.300" cy="3.300" r="2.500" fill="none" stroke="#e4e4e4" stroke-width="1.100"/><path d="M8 3.300H12.500V6.500" fill="none" stroke="#e4e4e4" stroke-width="1.100"/><path d="M10.200 6L12.500 9L14.800 6z" fill="#e4e4e4"/><circle cx="7.500" cy="12.500" r="2.800" fill="none" stroke="#8ccbf9" stroke-width="1.100"/><circle cx="12.500" cy="12.500" r="2.800" fill="none" stroke="#8ccbf9" stroke-width="1.100"/></g><g transform="translate(195 666)"><path d="M9.500 2.500A6.300 6.300 0 1 0 14.300 8.500" fill="none" stroke="#e4e4e4" stroke-width="1.200"/><path d="M8 0L12.500 2.800L8 5.600z" fill="#e4e4e4"/></g><g transform="translate(217 666)"><path d="M1.500 8C1.500 4 4.500 1 9 1" fill="none" stroke="#8ccbf9" stroke-width="1.300"/><path d="M9 1H16M1.500 9V15.500" stroke="#e4e4e4" stroke-width="1.100"/></g><path d="M236.2 680.9V684.2H232.9z" fill="#8e9299"/><path d="M63 690.700H73" stroke="#8ccbf9" stroke-width="1" stroke-dasharray="1.500 1"/><path d="M74 690.700h5" stroke="#e4e4e4" stroke-width="1"/><path d="M108 691.200h6" stroke="#e4e4e4" stroke-width="1"/><path d="M116 691.200h6" stroke="#8ccbf9" stroke-width="1"/><path d="M134 691h9" stroke="#8ccbf9" stroke-width="1.200"/><path d="M163.500 692l2 -2v2z" fill="#f2b840"/><path d="M173 692v-1.300h5v1.300M181 690.700h3l1 1" fill="none" stroke="#e4e4e4" stroke-width="1"/><path d="M195 692v-1.800h16v1.800" fill="none" stroke="#8ccbf9" stroke-width="1.200"/></svg>
<div class="a " style="left:0px;top:654.5px;width:184px;height:24px;background:#3a4554;"></div>
<svg class="a" style="left:14px;top:660px;" width="13" height="13" viewBox="0 0 13 13"><path d="M6.500 0.500V12.500M0.500 6.500H12.500" stroke="#f0f0f0" stroke-width="1.200"/></svg>
<svg class="a" style="left:44px;top:660px;" width="14" height="13" viewBox="0 0 14 13"><path d="M3.500 1.500H13M0.500 5H13M0.500 8.500H10M3.500 12H13" stroke="#f0f0f0" stroke-width="1.200"/><path d="M10.200 9.600L12.200 6.800L14.200 9.600z" fill="#f0f0f0"/></svg>
<svg class="a" style="left:0;top:0;overflow:hidden" width="1034" height="80" viewBox="56 38 1034 80"><g transform="translate(350.2 44.8)"><path d="M0.5 1.500Q0.500 0 2 0H8L11.800 3.800V11.700Q11.800 13.200 10.300 13.200H2Q0.500 13.200 0.500 11.700z" fill="#c9c9c9"/><circle cx="6" cy="7.200" r="3.600" fill="#2f9e4f"/><path d="M3.600 5L8.400 9.500" stroke="#14552a" stroke-width="1.300"/></g><g transform="translate(936.5 42.5)"><circle cx="5.500" cy="3.200" r="2.700" fill="none" stroke="#e8eaee" stroke-width="1.100"/><path d="M0.600 12.500C0.600 8.500 3 7.300 5.500 7.300S10.400 8.500 10.400 12.500" fill="none" stroke="#e8eaee" stroke-width="1.100"/></g><g transform="translate(1039 46.5)"><path d="M0 0H6.400L3.200 4z" fill="#c5cad2"/></g><g transform="translate(1056 42.5)"><circle cx="5.800" cy="5.800" r="5.300" fill="none" stroke="#fff" stroke-width="1"/><path d="M5.800 2.500V6.300H8.500" fill="none" stroke="#fff" stroke-width="1"/></g><g transform="translate(78.8 71.4)"><path d="M0 0H12L16.300 4.300V12H0z" fill="#dcdcdc"/><path d="M12 0V4.300H16.300z" fill="#f6f6f6"/></g><g transform="translate(111.9 71.4)"><path d="M0 0H5.500L7 1.500H13V4H3.500L0 11z" fill="#b4b4b4"/><path d="M3.800 4.300H16.300L12.800 12H0.300z" fill="#dcdcdc"/></g><g transform="translate(145 70.4)"><path d="M0 0H15.5V14.2H0z" fill="#b4b4b4"/><path d="M3 0H12.5V5.500H3z" fill="#eeeeee"/><path d="M3 8.300H12.5V14.2H3z" fill="#eeeeee"/><path d="M4.300 10.300H7V13.0H4.300z" fill="#8c8c8c"/></g><g transform="translate(177.9 69.3)"><path d="M0 0H14V13.5H0z" fill="#b4b4b4"/><path d="M3 0H11V5.500H3z" fill="#eeeeee"/><path d="M3 8.300H11V13.5H3z" fill="#eeeeee"/><path d="M4.300 10.300H7V12.3H4.300z" fill="#8c8c8c"/><path d="M7 14.500L12.300 8.200L15.200 10.600L9.900 16.900L6.600 17.600z" fill="#f1cc55"/><path d="M12.300 8.200L13.500 6.800L16.400 9.200L15.200 10.600z" fill="#ea5560"/><path d="M7 14.500L6.600 17.600L9.900 16.900z" fill="#f4f4f4"/></g><g transform="translate(248 72.9)"><path d="M0 4.200L6.300 0V2.600C11.500 2.600 15.500 5 16 9C13.500 6.800 10.500 6 6.300 6.200V8.600z" fill="#dcdcdc"/></g><g transform="translate(296.800 72.900) scale(-1 1)"><path d="M0 4.200L6.300 0V2.600C11.500 2.600 15.500 5 16 9C13.500 6.800 10.500 6 6.300 6.200V8.600z" fill="#dcdcdc"/></g><g transform="translate(350.9 69)"><g transform="scale(1.0)"><path d="M2.800 0H13.700V4.500H2.800z" fill="#f2f2f2"/><path d="M0 6Q0 4.200 1.800 4.200H14.700Q16.500 4.200 16.500 6V13.200H0z" fill="#dcdcdc"/><path d="M0 8.800H16.500V10H0z" fill="#f6f6f6"/><path d="M3.400 10.800H13.100V16.200H3.400z" fill="#6db9f2"/><path d="M3.400 10.800H13.100V12H3.400z" fill="#a8d8fa"/></g></g><g transform="translate(384 69)"><g transform="scale(0.87)"><path d="M2.800 0H13.700V4.500H2.800z" fill="#f2f2f2"/><path d="M0 6Q0 4.200 1.800 4.200H14.700Q16.500 4.200 16.500 6V13.200H0z" fill="#dcdcdc"/><path d="M0 8.800H16.500V10H0z" fill="#f6f6f6"/><path d="M3.400 10.800H13.100V16H3.400z" fill="#8c8c8c"/></g><path d="M7 13.800H12" stroke="#6db9f2" stroke-width="1.800"/><path d="M11.200 10.800L15.800 13.800L11.200 16.800z" fill="#6db9f2"/></g><g transform="translate(417.9 69.3)"><path d="M0 0H9.500L13 3.500V14.300H0z" fill="#b4b4b4"/><path d="M9.500 0V3.500H13z" fill="#eeeeee"/><path d="M2.800 0V14.300" stroke="#8a8a8a" stroke-width="0.900"/><path d="M6.500 7.500H15.500V16.200H6.500z" fill="#f0f0f0"/><path d="M6.500 7.500H15.500V9.500H6.500z" fill="#8c8c8c"/><path d="M9.500 9.500V16.200M12.500 9.500V16.200" stroke="#8c8c8c" stroke-width="0.900"/></g><g transform="translate(450 69.3)"><path d="M0 0H9.500L13 3.500V14.300H0z" fill="#b4b4b4"/><path d="M9.500 0V3.500H13z" fill="#eeeeee"/><path d="M2.800 0V14.300" stroke="#8a8a8a" stroke-width="0.900"/><path d="M7.500 13.300L12.700 7L15.600 9.400L10.400 15.700L7.100 16.400z" fill="#f1cc55"/><path d="M12.700 7L13.900 5.600L16.800 8L15.600 9.400z" fill="#ea5560"/><path d="M7.500 13.300L7.100 16.400L10.400 15.700z" fill="#f4f4f4"/></g><g transform="translate(522.3 69)"><path d="M0 0H10L13.800 3.800V16.500H0z" fill="#dcdcdc"/><path d="M10 0V3.800H13.800z" fill="#f6f6f6"/><path d="M-2.500 6.500H3" stroke="#6db9f2" stroke-width="1.800"/><path d="M2 3.200L7 6.500L2 9.800z" fill="#6db9f2"/></g><g transform="translate(553 69)"><path d="M0 0H10L14 4V16.500H0z" fill="#dcdcdc"/><path d="M10 0V4H14z" fill="#f6f6f6"/><path d="M6.600 11.200H12" stroke="#6db9f2" stroke-width="1.800"/><path d="M11 7.900L16 11.200L11 14.500z" fill="#6db9f2"/></g><g transform="translate(586.1 69.5)"><path d="M0 7H4V4H12.500L16 7.500V16H0z" fill="#dcdcdc"/><path d="M12.500 4V7.500H16z" fill="#f6f6f6"/><path d="M0.700 3A2.100 2.100 0 0 1 4.900 3V7.800A2.100 2.100 0 0 1 0.700 7.800z" fill="#3a4554" stroke="#6db9f2" stroke-width="1.300"/><path d="M2.800 3.800V7.200" stroke="#6db9f2" stroke-width="1"/></g><g transform="translate(619 71.5)"><path d="M0 0H14V14H0z" fill="#b4b4b4"/><path d="M2.500 0H8V5H2.500z" fill="#eeeeee"/><path d="M2.800 9H11.200V14H2.800z" fill="#eeeeee"/><circle cx="11.500" cy="2.600" r="4.600" fill="#6db9f2"/><path d="M11.500 -2V7.200M7.200 2.600H15.800" stroke="#e8f4fe" stroke-width="0.800"/><ellipse cx="11.500" cy="2.600" rx="2.300" ry="4.600" fill="none" stroke="#e8f4fe" stroke-width="0.800"/></g><g transform="translate(689.1 69.7)"><path d="M10 13.800H0V0H13.700V8" fill="none" stroke="#dcdcdc" stroke-width="1.100"/><circle cx="11.400" cy="10.600" r="2.600" fill="none" stroke="#dcdcdc" stroke-width="1.100"/><path d="M13.300 12.600L16.300 15.800" stroke="#dcdcdc" stroke-width="1.100"/></g><g transform="translate(721.9 69.7)"><path d="M5.500 9V2.200a1.100 1.100 0 0 1 2.200 0V7.500V1.100a1.100 1.100 0 0 1 2.200 0V7.500V2a1.100 1.100 0 0 1 2.200 0V8.500L13.200 5.300a1.100 1.100 0 0 1 2.100 0.600L14 11.500C13.500 14 12 16 9.500 16H8C6 16 5 15 3.800 13.500L0.500 9.600a1.200 1.200 0 0 1 1.800 -1.500L4.200 10z" fill="#dcdcdc"/></g><g transform="translate(755 68.7)"><ellipse cx="7.400" cy="8" rx="7" ry="3.700" fill="none" stroke="#dcdcdc" stroke-width="1.100"/><path d="M7.400 0V17.300" stroke="#6db9f2" stroke-width="1.200"/><path d="M8.500 2.200L12.300 4.300L8.700 6.400z" fill="#dcdcdc"/></g><g transform="translate(825.3 69.3)"><path d="M0 0H11.500V15H0z" fill="#dcdcdc"/><path d="M2 2.200H9.500V5.600H2z" fill="#6db9f2"/><path d="M2 7.500h7.500M2 10h5M2 12.500h4M4.500 7.500v6" stroke="#8c8c8c" stroke-width="0.900"/><path d="M6.800 11.500L10.500 8.200L13.800 12L10 15.300z" fill="#f1cc55"/><path d="M10.500 8.200L12.500 6.400L15.800 10.200L13.800 12z" fill="#f4f4f4"/></g><g transform="translate(857.8 69.3)"><path d="M0.500 5.500L7.500 12L4.500 12.300L6.200 15.600L4.800 16.300L3.200 13L0.500 15z" fill="#f4f4f4"/><path d="M9.500 0L6 5H8.500L7 9.500L12.500 3.500H9.800L11.500 0z" fill="#f4cf4a"/><path d="M8 8.500H16.500V16H8z" fill="#f0f0f0"/><path d="M10.200 10V14.500M12.300 10H15V14.500H12.300z" stroke="#6db9f2" stroke-width="1.100" fill="#6db9f2"/></g><g transform="translate(890.7 69.3)"><path d="M0.500 0.500H9V9H0.500z" fill="#b4b4b4"/><path d="M3.500 6.500A5 5 0 0 1 13.200 5" fill="none" stroke="#55cc77" stroke-width="2"/><path d="M12 11.500A5 5 0 0 1 3 11" fill="none" stroke="#55cc77" stroke-width="2"/><path d="M10.800 6.500L15.500 3L15.200 8.200z" fill="#55cc77"/><path d="M5.500 9.500L0.800 12.500L1.500 7.500z" fill="#55cc77"/><path d="M9 5V15.500M5.500 10.500H16.500M7.300 7.500V13.500M10.700 7.500V13.500" stroke="#f4f4f4" stroke-width="1.100"/></g><g transform="translate(923.7 69.3)"><circle cx="4.300" cy="4.500" r="4.300" fill="#5fd08a"/><circle cx="11.800" cy="12" r="4.300" fill="#6db9f2"/><path d="M9.500 3.500H13.500V6" fill="none" stroke="#dcdcdc" stroke-width="1.100"/><path d="M11.400 5.500L13.500 8L15.600 5.500z" fill="#dcdcdc"/></g><g transform="translate(958 69.3)"><path d="M0 0H9.500L13.400 3.900V16H0z" fill="#dcdcdc"/><path d="M9.500 0V3.900H13.400z" fill="#f8f8f8"/><path d="M5.500 2.500V9" stroke="#e0a62a" stroke-width="1.600"/><path d="M4.200 8.500H6.800L9.200 15.500H1.800z" fill="#f1c242"/></g><g transform="translate(989.7 69.3)"><circle cx="6" cy="9.500" r="5.600" fill="#8f939a"/><path d="M5.500 9H14.500V16H5.500z" fill="#3a4554" stroke="#dcdcdc" stroke-width="1.100"/><path d="M10.300 0.500L9.600 8M13.800 0.500L13.100 8M8.300 3H15.700M8 5.800H15.400" stroke="#6db9f2" stroke-width="1.200"/></g><path d="M1070.500 72.500L1075.700 77.700L1070.500 82.900M1076 72.500L1081.200 77.700L1076 82.900" fill="none" stroke="#1f2530" stroke-width="1.200"/><g transform="translate(61.3 98.8)"><rect x="0" y="0" width="7" height="7" fill="#7cc3f7"/><rect x="8.200" y="1" width="6" height="6" fill="#dcdcdc"/><rect x="1" y="8.200" width="6" height="6" fill="#dcdcdc"/><rect x="8.200" y="8.200" width="6" height="6" fill="#dcdcdc"/></g><path d="M91.500 100V111.500M85.800 105.700H97.300" stroke="#e8e8e8" stroke-width="1.100"/></svg>
<svg class="a" style="left:184px;top:80px;overflow:hidden" width="850" height="598" viewBox="240 118 850 598"><g transform="translate(872.4 123.3)"><path d="M0 4.500L7 1L13 4L6 7.500zM0 7.500L2 6.500L6 8.700L12 5.700L13 6.300L6 10zM0 10L2 9L6 11.200L9 9.700" fill="#ececec" stroke="#ececec" stroke-width="0.500"/><circle cx="11.700" cy="10.500" r="3.600" fill="#f4f4f4" stroke="#2e3543" stroke-width="0.800"/><path d="M11.700 9.800V12.700M11.700 8.200v0.900" stroke="#2e3543" stroke-width="1.300"/></g><g transform="translate(925.8 121.9)"><path d="M0 7.500H4V3.500H11.500L15.500 7.500V13.400H0z" fill="#e8e8e8"/><path d="M11.500 3.500V7.500H15.500z" fill="#fafafa"/><path d="M1 1.500A2.300 2.300 0 0 1 5.600 1.500V8.500A2.300 2.300 0 0 1 1 8.500z" fill="#3a4554" stroke="#f0f0f0" stroke-width="1.200"/><path d="M3.300 3V8" stroke="#f0f0f0" stroke-width="1"/></g><g transform="translate(978.2 122.3)"><path d="M0 0H14V12.500H0z" fill="#ececec"/><path d="M1.300 1.200H12.700V2.400H1.300zM1.300 4H4.500V7H1.300zM5.600 4H8.600V7H5.600zM9.700 4H12.700V7H9.700zM1.300 8.200H4.500V11.200H1.300zM5.600 8.200H8.600V11.200H5.600zM9.700 8.200H12.700V11.200H9.700z" fill="#2e3543"/></g><path d="M1074.500 125.300L1077.800 129L1074.500 132.700M1078.500 125.300L1081.800 129L1078.500 132.700" fill="none" stroke="#8a93a3" stroke-width="1.100"/><g transform="translate(1064.5 141.5)"><path d="M6 0.600H12V11.800H6M9 0.600V11.800" fill="none" stroke="#f0f0f0" stroke-width="1.100"/><path d="M2.500 6.200H8" stroke="#6db9f2" stroke-width="1.300"/><path d="M3.200 3.800L0 6.200L3.200 8.600z" fill="#6db9f2"/></g><path d="M897.0 165V186" stroke="#323a48" stroke-width="1"/><path d="M922.1 165V186" stroke="#323a48" stroke-width="1"/><path d="M947.1 165V186" stroke="#323a48" stroke-width="1"/><path d="M972.2 165V186" stroke="#323a48" stroke-width="1"/><path d="M997.3 165V186" stroke="#323a48" stroke-width="1"/><path d="M1022.4 165V186" stroke="#323a48" stroke-width="1"/><path d="M1047.4 165V186" stroke="#323a48" stroke-width="1"/><g transform="translate(875.6 167)"><path d="M3 6.500H6.500V3.500H11L14 6.500V14H3z" fill="#f0f0f0"/><path d="M1 2A2 2 0 0 1 5 2V8A2 2 0 0 1 1 8z" fill="none" stroke="#6db9f2" stroke-width="1.200"/><path d="M3 3.200V7.500" stroke="#6db9f2" stroke-width="0.900"/><path d="M12 9V16.500M8.200 12.700H15.800" stroke="#3fd068" stroke-width="1.900"/></g><g transform="translate(900.7 167)"><path d="M3 6.500H6.500V3.500H11L14 6.500V14H3z" fill="#8f959e"/><path d="M1 2A2 2 0 0 1 5 2V8A2 2 0 0 1 1 8z" fill="none" stroke="#5f93c8" stroke-width="1.200"/><path d="M3 3.200V7.500" stroke="#5f93c8" stroke-width="0.900"/><path d="M7.500 12.500L12.700 6.500L15.300 8.700L10.100 14.700L7.200 15.400z" fill="#c9a85a"/><path d="M12.700 6.500L13.900 5.100L16.500 7.300L15.300 8.700z" fill="#c0555f"/></g><g transform="translate(925.8 167)"><path d="M3 6.500H6.500V3.500H11L14 6.500V14H3z" fill="#8f959e"/><path d="M1 2A2 2 0 0 1 5 2V8A2 2 0 0 1 1 8z" fill="none" stroke="#5f93c8" stroke-width="1.200"/><path d="M3 3.200V7.500" stroke="#5f93c8" stroke-width="0.900"/></g><g transform="translate(950.8 167)"><path d="M3 6.500H6.500V3.500H11L14 6.500V14H3z" fill="#8f959e"/><path d="M1 2A2 2 0 0 1 5 2V8A2 2 0 0 1 1 8z" fill="none" stroke="#5f93c8" stroke-width="1.200"/><path d="M3 3.200V7.500" stroke="#5f93c8" stroke-width="0.900"/><path d="M9.500 10.500L14.500 15.500M14.500 10.500L9.500 15.500" stroke="#c0555f" stroke-width="1.500"/></g><g transform="translate(976.5 167.5)"><path d="M1.800 7A6 6 0 0 1 12.500 3.600" fill="none" stroke="#3fd068" stroke-width="2.200"/><path d="M14.200 8.500A6 6 0 0 1 3.500 12" fill="none" stroke="#3fd068" stroke-width="2.200"/><path d="M10 5.800L15.500 0.800L15.700 7z" fill="#3fd068"/><path d="M6 9.800L0.500 14.800L0.300 8.600z" fill="#3fd068"/></g><g transform="translate(1001.5 167)"><path d="M1 2.500H7V7.500H1zM8.500 10H15V15.500H8.500z" fill="#8f959e"/><path d="M4 7.500V12.500H8.500" fill="none" stroke="#8f959e" stroke-width="1"/><g transform="translate(0 -4.500)"><path d="M7.500 12.500L12.700 6.500L15.300 8.700L10.100 14.700L7.200 15.400z" fill="#c9a85a"/><path d="M12.700 6.500L13.900 5.100L16.500 7.300L15.300 8.700z" fill="#c0555f"/></g></g><g transform="translate(1026.5 167.5)"><path d="M0.500 1.500H6L7.500 3.500H15.500V14.500H0.500z" fill="#f0f0f0"/><path d="M0.500 1.500H6L7.500 3.500H0.500z" fill="#d0d0d0"/><path d="M3.500 7.700H11M5 11.200H12.500" stroke="#6db9f2" stroke-width="1.200"/><path d="M10.200 5.700L13 7.700L10.200 9.700zM5.800 9.200L3 11.200L5.800 13.200z" fill="#6db9f2"/></g><circle cx="1060.700" cy="175.300" r="7.800" fill="#ececec"/><path d="M1059 172.800h2.200v5.400M1058.600 178.600h4.400" fill="none" stroke="#2a2f3a" stroke-width="1.400"/><circle cx="1060.500" cy="170.600" r="1.100" fill="#2a2f3a"/><g transform="translate(896 200)"><path d="M0 0H14V16H0z" fill="#e6e6e6"/><path d="M4.300 0V16M0 5H14" stroke="#5a5a5a" stroke-width="0.900"/><circle cx="4.300" cy="5" r="1.300" fill="#e6e6e6" stroke="#5a5a5a" stroke-width="0.800"/></g><g transform="translate(1034.5 591.5)"><path d="M0 0.500H4.500L6 2H11V4H3L0 10.500z" fill="#a9afb9"/><path d="M3.200 4.500H14L11 11.500H0.200z" fill="#c4c9d1"/></g><g transform="translate(743 696)"><path d="M0 0H16V14.600H0z" fill="#d9d9d9"/><path d="M8 1.500V13.200M11.200 1.500V13.200M14.300 1.500V13.200M2 4.200H14.500M2 7.400H14.500M2 10.500H14.500" stroke="#8a8a8a" stroke-width="0.700"/><path d="M1.700 1.900L7.300 12.600H1.700z" fill="#333"/><path d="M0.400 0.400H15.600V14.200H0.400z" fill="none" stroke="#b9b9b9" stroke-width="0.800"/></g><g transform="translate(764.5 696)"><path d="M1 0V15.500H16.500M1 10.500H5.500V15.500" fill="none" stroke="#e6e6e6" stroke-width="1"/></g><g transform="translate(787 696)"><circle cx="7" cy="8.500" r="6.300" fill="none" stroke="#e6e6e6" stroke-width="1.100"/><path d="M7 8.500H17M7 8.500L15.500 0" stroke="#e6e6e6" stroke-width="1.100"/></g><g transform="translate(809 696)"><path d="M5.500 2V10M1.500 6H9.500" stroke="#e6e6e6" stroke-width="1.200"/><path d="M7 11H16.500V15H7z" fill="#fff"/></g><g transform="translate(831 696)"><path d="M0.500 2H16" stroke="#e6e6e6" stroke-width="1.200"/><path d="M0.500 6H16M0.500 10.600H16" stroke="#e6e6e6" stroke-width="1"/><path d="M0.500 4.800H8.500V7.200H0.500z" fill="#e6e6e6"/><path d="M0.500 9H6.500V12.200H0.500z" fill="#e6e6e6"/></g><g transform="translate(853.5 696.5)"><path d="M0.600 0.600H15.600V15.600H0.600z" fill="none" stroke="#fff" stroke-width="1.200"/><rect x="2.2" y="2.2" width="2" height="2" fill="#fff"/><rect x="2.2" y="6.2" width="2" height="2" fill="#fff"/><rect x="2.2" y="10.2" width="2" height="2" fill="#fff"/><rect x="4.2" y="4.2" width="2" height="2" fill="#fff"/><rect x="4.2" y="8.2" width="2" height="2" fill="#fff"/><rect x="4.2" y="12.2" width="2" height="2" fill="#fff"/><rect x="6.2" y="2.2" width="2" height="2" fill="#fff"/><rect x="6.2" y="6.2" width="2" height="2" fill="#fff"/><rect x="6.2" y="10.2" width="2" height="2" fill="#fff"/><rect x="8.2" y="4.2" width="2" height="2" fill="#fff"/><rect x="8.2" y="8.2" width="2" height="2" fill="#fff"/><rect x="8.2" y="12.2" width="2" height="2" fill="#fff"/><rect x="10.2" y="2.2" width="2" height="2" fill="#fff"/><rect x="10.2" y="6.2" width="2" height="2" fill="#fff"/><rect x="10.2" y="10.2" width="2" height="2" fill="#fff"/><rect x="12.2" y="4.2" width="2" height="2" fill="#fff"/><rect x="12.2" y="8.2" width="2" height="2" fill="#fff"/><rect x="12.2" y="12.2" width="2" height="2" fill="#fff"/></g><g transform="translate(875 696)"><path d="M4 1H1V15H4M9.500 1H12.500V4" fill="none" stroke="#e6e6e6" stroke-width="1.100"/><rect x="3.800" y="3.800" width="4" height="3.600" fill="none" stroke="#e6e6e6" stroke-width="1"/><circle cx="5.800" cy="11.200" r="2" fill="none" stroke="#e6e6e6" stroke-width="1"/><path d="M8.500 5.500L15.500 12.500L12.300 12.700L14 16L12.600 16.700L11 13.500L8.500 15.500z" fill="#fff"/></g><g transform="translate(897 696)"><path d="M0.500 14.500H16M0.500 14.500L15 1.500" stroke="#fff" stroke-width="1.300" fill="none"/><rect x="6.300" y="6.300" width="3.200" height="3.200" fill="#fff"/></g><g transform="translate(918.5 695.5)"><path d="M3 3H17V17.500H3z" fill="none" stroke="#fff" stroke-width="1.300"/><rect x="1" y="1" width="4" height="4" fill="#5b8dc9" stroke="#fff" stroke-width="1"/></g><path d="M950 700.800V707.800L945.700 704.300z" fill="#7f8897"/><path d="M985.300 700.800V707.800L989.600 704.300z" fill="#7f8897"/><g transform="translate(959.8 695.7)"><path d="M7 0.600H16.200V15.600H0.600V7" fill="none" stroke="#e6e6e6" stroke-width="1.100" stroke-dasharray="2.800 1.600"/><rect x="7" y="8" width="5.600" height="5.600" fill="none" stroke="#e6e6e6" stroke-width="1.100"/><path d="M6.500 6.500L1.500 1.500" stroke="#e6e6e6" stroke-width="1.100"/><path d="M0.300 0.300H4.300L0.300 4.300z" fill="#e6e6e6"/></g><g transform="translate(1001.8 697)"><path d="M6.500 0L8.800 7.500L13.500 15L7.800 11.800L6.500 14.500L5.200 11.800L-0.500 15L4.200 7.500z" fill="#e2e2e2"/><circle cx="12.800" cy="3.200" r="2.200" fill="none" stroke="#e6e6e6" stroke-width="1"/></g><g transform="translate(1023.8 697)"><path d="M6.500 0L8.800 7.500L13.500 15L7.800 11.800L6.500 14.500L5.200 11.800L-0.500 15L4.200 7.500z" fill="#e2e2e2"/><path d="M13 -1L9.800 3.800H12L10.500 7.500L15 2.500H12.700L14.500 -1z" fill="#f4cf4a"/></g><g transform="translate(1045.2 696)"><rect x="0.600" y="0.600" width="6.200" height="6.200" fill="none" stroke="#e6e6e6" stroke-width="1.100"/><circle cx="12.300" cy="7" r="3.200" fill="none" stroke="#e6e6e6" stroke-width="1.100"/><path d="M3 15.500L6.800 9L10.600 15.500z" fill="none" stroke="#e6e6e6" stroke-width="1.100"/></g><g transform="translate(1074.4 703.8)"><circle r="4.600" fill="none" stroke="#e2e2e2" stroke-width="3.400"/><rect x="-1.900" y="-7.800" width="3.800" height="4" fill="#e2e2e2" transform="rotate(0)"/><rect x="-1.900" y="-7.800" width="3.800" height="4" fill="#e2e2e2" transform="rotate(45)"/><rect x="-1.900" y="-7.800" width="3.800" height="4" fill="#e2e2e2" transform="rotate(90)"/><rect x="-1.900" y="-7.800" width="3.800" height="4" fill="#e2e2e2" transform="rotate(135)"/><rect x="-1.900" y="-7.800" width="3.800" height="4" fill="#e2e2e2" transform="rotate(180)"/><rect x="-1.900" y="-7.800" width="3.800" height="4" fill="#e2e2e2" transform="rotate(225)"/><rect x="-1.900" y="-7.800" width="3.800" height="4" fill="#e2e2e2" transform="rotate(270)"/><rect x="-1.900" y="-7.800" width="3.800" height="4" fill="#e2e2e2" transform="rotate(315)"/></g><path d="M311.800 698V710M305.800 704H317.800" stroke="#e8e8e8" stroke-width="1.100"/></svg>
</div>
</body></html>
